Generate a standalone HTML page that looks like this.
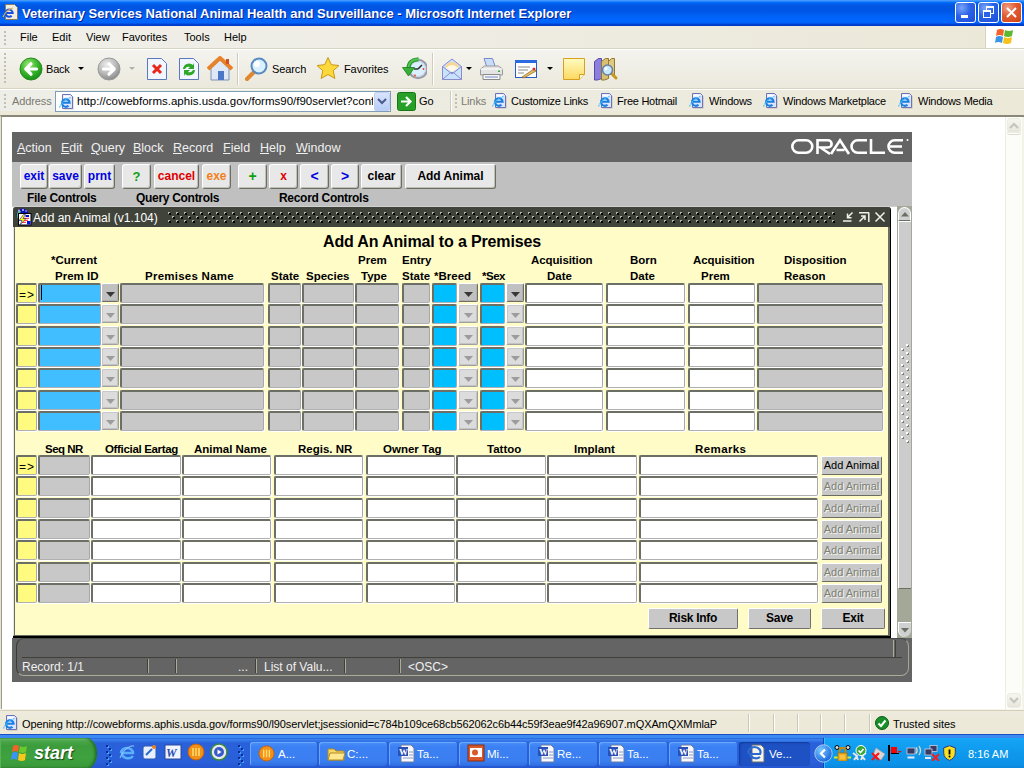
<!DOCTYPE html><html><head><meta charset="utf-8"><style>
*{margin:0;padding:0;box-sizing:border-box}
html,body{width:1024px;height:768px;overflow:hidden;background:#fff;font-family:"Liberation Sans",sans-serif;position:relative}
.ab{position:absolute}
.t{position:absolute;white-space:nowrap;line-height:1}
</style></head><body>

<div class="ab" style="left:0;top:0;width:1024px;height:26px;background:linear-gradient(#4496ff 0px,#4496ff 1px,#0072ff 2px,#005ce8 4px,#0055e2 8px,#0056e6 11px,#0060f2 15px,#0066ff 19px,#0064fc 23px,#0044d4 24px,#0038c4 26px)"></div>


<svg class="ab" style="left:2px;top:4px" width="17" height="17" viewBox="0 0 17 17">
<path d="M3.5 .5h9l3 3v12h-12z" fill="#f0eee0" stroke="#8a7a60"/>
<path d="M3.5 9h7.2a3.6 3.6 0 1 0-1 2.7" fill="none" stroke="#1a50e0" stroke-width="2"/>
<path d="M1 13c2-5 6-8 10-9" fill="none" stroke="#d8b050" stroke-width="1.2"/>
</svg>
<div class="t" style="left:22px;top:7px;font-size:13px;font-weight:bold;color:#fff;text-shadow:1px 1px 0 #0a1e8c">Veterinary Services National Animal Health and Surveillance - Microsoft Internet Explorer</div>

<div class="ab" style="left:955px;top:2px;width:21px;height:21px;border:1px solid #fff;border-radius:3px;background:radial-gradient(circle at 30% 25%,#7aa4f8,#2a62e8 45%,#1a4fd8)"><div class="ab" style="left:5px;top:12px;width:7px;height:3px;background:#fff"></div></div>
<div class="ab" style="left:978px;top:2px;width:21px;height:21px;border:1px solid #fff;border-radius:3px;background:radial-gradient(circle at 30% 25%,#7aa4f8,#2a62e8 45%,#1a4fd8)"><div class="ab" style="left:7px;top:3px;width:8px;height:8px;border:1px solid #fff;border-top-width:2px"></div><div class="ab" style="left:4px;top:7px;width:8px;height:8px;border:1px solid #fff;border-top-width:2px;background:#2a62e8"></div></div>
<div class="ab" style="left:1001px;top:2px;width:21px;height:21px;border:1px solid #fff;border-radius:3px;background:radial-gradient(circle at 30% 25%,#f0a088,#e05a30 45%,#d04418)"><svg class="ab" style="left:3px;top:3px" width="13" height="13"><path d="M2 2L11 11M11 2L2 11" stroke="#fff" stroke-width="2"/></svg></div>
<div class="ab" style="left:0;top:26px;width:1024px;height:23px;background:linear-gradient(90deg,#f0efe9,#eeece2 50%,#ebe8d8);border-bottom:1px solid #d8d4c4"></div>
<div class="ab" style="left:985px;top:26px;width:39px;height:22px;background:#fff;border-left:1px solid #d8d4c4"></div>

<div class="ab" style="left:4px;top:31px;width:2px;height:14px;background:repeating-linear-gradient(#c2bfae 0 2px,transparent 2px 4px)"></div>
<div class="t" style="left:20px;top:32px;font-size:11px;color:#000">File</div>
<div class="t" style="left:52px;top:32px;font-size:11px;color:#000">Edit</div>
<div class="t" style="left:86px;top:32px;font-size:11px;color:#000">View</div>
<div class="t" style="left:122px;top:32px;font-size:11px;color:#000">Favorites</div>
<div class="t" style="left:184px;top:32px;font-size:11px;color:#000">Tools</div>
<div class="t" style="left:224px;top:32px;font-size:11px;color:#000">Help</div>
<svg class="ab" style="left:994px;top:27px" width="22" height="20" viewBox="0 0 22 20">
<path d="M3 3q3-2 7 0l-1 6q-4-2-7 0z" fill="#f2622a"/>
<path d="M11 3q4 2 8 0l-1 6q-4 2-8 0z" fill="#5cb82e"/>
<path d="M2 10q3-2 7 0l-1 6q-4-2-7 0z" fill="#3a94e8"/>
<path d="M10 10q4 2 8 0l-1 6q-4 2-8 0z" fill="#f4c21a"/>
</svg>

<div class="ab" style="left:0;top:49px;width:1024px;height:40px;background:linear-gradient(#f4f3ee,#ebe9dc);border-top:1px solid #fff;border-bottom:1px solid #d8d4c4"></div>

<div class="ab" style="left:4px;top:53px;width:2px;height:32px;background:repeating-linear-gradient(#c2bfae 0 2px,transparent 2px 4px)"></div>
<svg class="ab" style="left:19px;top:57px" width="24" height="24" viewBox="0 0 24 24">
<defs><radialGradient id="gg" cx="40%" cy="30%" r="70%"><stop offset="0" stop-color="#9ce87a"/><stop offset="0.55" stop-color="#3cb82c"/><stop offset="1" stop-color="#18901a"/></radialGradient>
<radialGradient id="gr" cx="40%" cy="30%" r="70%"><stop offset="0" stop-color="#eeeeee"/><stop offset="0.6" stop-color="#b8b8b8"/><stop offset="1" stop-color="#8c8c8c"/></radialGradient></defs>
<circle cx="12" cy="12" r="11" fill="url(#gg)" stroke="#2a8a1e" stroke-width="1"/>
<path d="M7 12h10.5M12 6.8L6.8 12l5.2 5.2" stroke="#fff" stroke-width="3.2" stroke-linecap="round" stroke-linejoin="round" fill="none"/>
</svg>
<div class="t" style="left:46px;top:64px;font-size:11px;letter-spacing:-0.2px">Back</div>
<div class="ab" style="left:78px;top:67px;width:0;height:0;border-left:3px solid transparent;border-right:3px solid transparent;border-top:3px solid #000"></div>
<svg class="ab" style="left:97px;top:57px" width="24" height="24" viewBox="0 0 24 24">
<circle cx="12" cy="12" r="11" fill="url(#gr)" stroke="#9a9a9a" stroke-width="1"/>
<path d="M17 12H6.5M12 6.8l5.2 5.2-5.2 5.2" stroke="#fff" stroke-width="3.2" stroke-linecap="round" stroke-linejoin="round" fill="none"/>
</svg>
<div class="ab" style="left:129px;top:67px;width:0;height:0;border-left:3px solid transparent;border-right:3px solid transparent;border-top:3px solid #b0b0b0"></div>
<svg class="ab" style="left:146px;top:57px" width="22" height="24" viewBox="0 0 22 24">
<path d="M1.5 1.5h14l5 5v16h-19z" fill="#f2f6ff" stroke="#5a78c0"/>
<path d="M7 8l8 8M15 8l-8 8" stroke="#e8261a" stroke-width="3"/>
</svg>
<svg class="ab" style="left:178px;top:57px" width="22" height="24" viewBox="0 0 22 24">
<path d="M1.5 1.5h14l5 5v16h-19z" fill="#f2f6ff" stroke="#5a78c0"/>
<path d="M5 12a6 6 0 0 1 10-4l1-2v6h-6l2-2a4 4 0 0 0-5 2z" fill="#2fa82a"/>
<path d="M17 13a6 6 0 0 1-10 4l-1 2v-6h6l-2 2a4 4 0 0 0 5-2z" fill="#2fa82a"/>
</svg>
<svg class="ab" style="left:207px;top:56px" width="26" height="26" viewBox="0 0 26 26">
<path d="M4 12v12h18V12L13 4z" fill="#dfe8f6" stroke="#7a92b8"/>
<path d="M1 13L13 2l12 11" fill="none" stroke="#e8822a" stroke-width="4" stroke-linejoin="round"/>
<rect x="11" y="15" width="6" height="9" fill="#4a78c8"/>
<rect x="19" y="3" width="3" height="5" fill="#d05020"/>
</svg>
<div class="ab" style="left:237px;top:53px;width:1px;height:32px;background:#d0ccbc;box-shadow:1px 0 0 #fff"></div>
<svg class="ab" style="left:244px;top:56px" width="26" height="26" viewBox="0 0 26 26">
<path d="M3 23l7-7" stroke="#e0882e" stroke-width="4" stroke-linecap="round"/>
<circle cx="15" cy="10" r="7.5" fill="#d8f0ff" stroke="#5a8ac0" stroke-width="2"/>
<circle cx="13" cy="8" r="3" fill="#fff"/>
</svg>
<div class="t" style="left:272px;top:64px;font-size:11px;letter-spacing:-0.1px">Search</div>
<svg class="ab" style="left:315px;top:56px" width="26" height="26" viewBox="0 0 26 26">
<path d="M13 1.5l3.3 7.2 7.7.8-5.8 5.2 1.7 7.8L13 18.5l-6.9 4 1.7-7.8L2 9.5l7.7-.8z" fill="#fcd83a" stroke="#c89a18" stroke-width="1"/>
</svg>
<div class="t" style="left:344px;top:64px;font-size:11px;letter-spacing:-0.1px">Favorites</div>
<svg class="ab" style="left:401px;top:57px" width="26" height="24" viewBox="0 0 26 24">
<circle cx="17" cy="12" r="9.2" fill="#d8f0ff" stroke="#9a9aa8" stroke-width="2"/>
<circle cx="17" cy="12" r="7.5" fill="none" stroke="#c0c8e0" stroke-width=".8"/>
<path d="M17 12l4-4M17 12h-4" stroke="#303030" stroke-width="1.6"/>
<circle cx="22.5" cy="12" r=".9" fill="#f04010"/><circle cx="14" cy="18.5" r=".9" fill="#f04010"/>
<path d="M17.5 2.5C11 2 7.5 6 7.5 11" fill="none" stroke="#2a9a2a" stroke-width="4"/>
<path d="M17.5 2.5C11 2 7.5 6 7.5 11" fill="none" stroke="#58c858" stroke-width="1.8"/>
<path d="M1.5 10.5h12L7.5 19z" fill="#38b038" stroke="#1a7a1a" stroke-width=".8"/>
</svg>
<div class="ab" style="left:432px;top:53px;width:1px;height:32px;background:#d0ccbc;box-shadow:1px 0 0 #fff"></div>
<svg class="ab" style="left:441px;top:57px" width="22" height="24" viewBox="0 0 22 24">
<path d="M1.5 9.5L11 2l9.5 7.5v13h-19z" fill="#c8e4fc" stroke="#8a8ad0"/>
<path d="M4 10q3-5 7-5 4 0 7 5l-7 5z" fill="#f8d890"/>
<path d="M5 11q3-3 6-3t6 3l-6 4z" fill="#fff8ea"/>
<path d="M1.5 22.5l8-7h3l8 7M1.5 9.5L11 17l9.5-7.5" fill="none" stroke="#8a8ad0"/>
</svg>
<div class="ab" style="left:466px;top:67px;width:0;height:0;border-left:3px solid transparent;border-right:3px solid transparent;border-top:3px solid #000"></div>
<svg class="ab" style="left:479px;top:57px" width="25" height="24" viewBox="0 0 25 24">
<path d="M5 1.5h8.5l3 9H8z" fill="#c8dcfc" stroke="#7a8ac8"/>
<path d="M1.5 12l4-3h14l4 3v6h-22z" fill="#e4e4e4" stroke="#9a9a9a"/>
<path d="M1.5 12h22" stroke="#fff"/>
<path d="M4 17.5h17v5H4z" fill="#f4f4f4" stroke="#8a8a8a"/>
<path d="M6 20h13" stroke="#7a8ac8"/>
<rect x="19" y="13.5" width="2" height="1.5" fill="#30b030"/>
</svg>
<svg class="ab" style="left:514px;top:57px" width="24" height="24" viewBox="0 0 24 24">
<rect x="1.5" y="3.5" width="21" height="17" fill="#fff" stroke="#2a5ac8" stroke-width="1"/>
<rect x="1" y="3" width="22" height="3" fill="#2a6ae0"/>
<path d="M4 10h12M4 13h10M4 16h6" stroke="#8a8a8a"/>
<path d="M8 20l12-8 2 2-12 7z" fill="#e8c060" stroke="#806020" stroke-width=".7"/>
<circle cx="20" cy="12" r="1.5" fill="#d03030"/>
</svg>
<div class="ab" style="left:547px;top:67px;width:0;height:0;border-left:3px solid transparent;border-right:3px solid transparent;border-top:3px solid #000"></div>
<svg class="ab" style="left:562px;top:57px" width="24" height="24" viewBox="0 0 24 24">
<defs><linearGradient id="ny" x1="0" y1="0" x2="0" y2="1"><stop offset="0" stop-color="#fffcc0"/><stop offset="1" stop-color="#fcd860"/></linearGradient></defs>
<path d="M1.5 1.5h21v16l-5 5h-16z" fill="url(#ny)" stroke="#d8a020"/>
<path d="M17.5 22.5v-5h5" fill="#fff8d0" stroke="#d8a020"/>
</svg>
<svg class="ab" style="left:593px;top:57px" width="26" height="24" viewBox="0 0 26 24">
<path d="M1.5 4.5l4-3h3v20l-4 1.5h-3z" fill="#8a80e0" stroke="#5a4aa8"/>
<path d="M8.5 4.5l4-3h3v20l-4 1.5h-3z" fill="#d8c070" stroke="#907830"/>
<path d="M15.5 4.5l3-3h3v18" fill="#e0c880" stroke="#907830"/>
<path d="M18 16l5 5" stroke="#c89820" stroke-width="3" stroke-linecap="round"/>
<circle cx="14.5" cy="13" r="5" fill="#c8e8ff" stroke="#6a80a0" stroke-width="1.6"/>
<circle cx="13" cy="11.5" r="1.5" fill="#fff"/>
</svg>

<div class="ab" style="left:0;top:89px;width:1024px;height:27px;background:linear-gradient(90deg,#eeeee8,#ece9d8);border-top:1px solid #fff"></div>
<div class="ab" style="left:0;top:111px;width:1024px;height:5px;background:#ece9d8"></div>

<div class="ab" style="left:4px;top:94px;width:2px;height:16px;background:repeating-linear-gradient(#c2bfae 0 2px,transparent 2px 4px)"></div>
<div class="t" style="left:12px;top:96px;font-size:11px;letter-spacing:-0.1px;color:#7a7a70">Address</div>
<div class="ab" style="left:55px;top:91px;width:336px;height:21px;background:#fff;border:1px solid #7f9db9"></div>
<svg class="ab" style="left:58px;top:93px" width="16" height="17" viewBox="0 0 16 17">
<path d="M5.5 2.5h8l2 2v12h-10z" fill="#6a6a58" opacity=".35"/>
<path d="M4.5 1.5h8l2 2v12h-10z" fill="#dce4ff" stroke="#6a72b8"/>
<path d="M5.5 2.5h6v2h-6z" fill="#fff"/>
<path d="M4 9.8h7.6a3.8 3.8 0 1 0-1.1 2.9" fill="none" stroke="#1a80e0" stroke-width="2.1"/>
<path d="M1.5 14.5c2-5 7-9 11-10" fill="none" stroke="#48c0ff" stroke-width="1.2" stroke-dasharray="1.5 .8"/>
</svg>
<div class="t" style="left:77px;top:96px;font-size:11.5px;width:296px;overflow:hidden">http://cowebforms.aphis.usda.gov/forms90/f90servlet?config</div>
<div class="ab" style="left:374px;top:92px;width:16px;height:19px;background:linear-gradient(#d8e4fc,#b8cdf8);border:1px solid #c0d0f4;border-radius:2px"></div>
<svg class="ab" style="left:377px;top:98px" width="10" height="7"><path d="M1 1l4 4 4-4" stroke="#4a5a8a" stroke-width="2" fill="none"/></svg>
<svg class="ab" style="left:397px;top:92px" width="19" height="19" viewBox="0 0 19 19">
<rect x=".5" y=".5" width="18" height="18" rx="2" fill="#28a028" stroke="#187818"/>
<path d="M4 9.5h9M9 5l4.5 4.5L9 14" stroke="#fff" stroke-width="2.2" fill="none"/>
</svg>
<div class="t" style="left:419px;top:96px;font-size:11px;letter-spacing:-0.1px">Go</div>
<div class="ab" style="left:450px;top:91px;width:1px;height:21px;background:#d0ccbc;box-shadow:1px 0 0 #fff"></div>

<div class="ab" style="left:455px;top:94px;width:2px;height:16px;background:repeating-linear-gradient(#c2bfae 0 2px,transparent 2px 4px)"></div>
<div class="t" style="left:461px;top:96px;font-size:11px;letter-spacing:-0.1px;color:#7a7a70">Links</div>
<svg class="ab" style="left:491px;top:92px" width="17" height="17" viewBox="0 0 17 17">
<path d="M5.5 2.5h8l2 2v12h-10z" fill="#6a6a58" opacity=".35"/>
<path d="M4.5 1.5h8l2 2v12h-10z" fill="#dce4ff" stroke="#6a72b8"/>
<path d="M5.5 2.5h6v2h-6z" fill="#fff"/>
<path d="M4 9.8h7.6a3.8 3.8 0 1 0-1.1 2.9" fill="none" stroke="#1a80e0" stroke-width="2.1"/>
<path d="M1.5 14.5c2-5 7-9 11-10" fill="none" stroke="#48c0ff" stroke-width="1.2" stroke-dasharray="1.5 .8"/>
</svg>
<div class="t" style="left:511px;top:96px;font-size:11px;letter-spacing:-0.25px;width:80px">Customize Links</div>
<svg class="ab" style="left:597px;top:92px" width="17" height="17" viewBox="0 0 17 17">
<path d="M5.5 2.5h8l2 2v12h-10z" fill="#6a6a58" opacity=".35"/>
<path d="M4.5 1.5h8l2 2v12h-10z" fill="#dce4ff" stroke="#6a72b8"/>
<path d="M5.5 2.5h6v2h-6z" fill="#fff"/>
<path d="M4 9.8h7.6a3.8 3.8 0 1 0-1.1 2.9" fill="none" stroke="#1a80e0" stroke-width="2.1"/>
<path d="M1.5 14.5c2-5 7-9 11-10" fill="none" stroke="#48c0ff" stroke-width="1.2" stroke-dasharray="1.5 .8"/>
</svg>
<div class="t" style="left:617px;top:96px;font-size:11px;letter-spacing:-0.25px;width:65px">Free Hotmail</div>
<svg class="ab" style="left:688px;top:92px" width="17" height="17" viewBox="0 0 17 17">
<path d="M5.5 2.5h8l2 2v12h-10z" fill="#6a6a58" opacity=".35"/>
<path d="M4.5 1.5h8l2 2v12h-10z" fill="#dce4ff" stroke="#6a72b8"/>
<path d="M5.5 2.5h6v2h-6z" fill="#fff"/>
<path d="M4 9.8h7.6a3.8 3.8 0 1 0-1.1 2.9" fill="none" stroke="#1a80e0" stroke-width="2.1"/>
<path d="M1.5 14.5c2-5 7-9 11-10" fill="none" stroke="#48c0ff" stroke-width="1.2" stroke-dasharray="1.5 .8"/>
</svg>
<div class="t" style="left:709px;top:96px;font-size:11px;letter-spacing:-0.25px;width:47px">Windows</div>
<svg class="ab" style="left:762px;top:92px" width="17" height="17" viewBox="0 0 17 17">
<path d="M5.5 2.5h8l2 2v12h-10z" fill="#6a6a58" opacity=".35"/>
<path d="M4.5 1.5h8l2 2v12h-10z" fill="#dce4ff" stroke="#6a72b8"/>
<path d="M5.5 2.5h6v2h-6z" fill="#fff"/>
<path d="M4 9.8h7.6a3.8 3.8 0 1 0-1.1 2.9" fill="none" stroke="#1a80e0" stroke-width="2.1"/>
<path d="M1.5 14.5c2-5 7-9 11-10" fill="none" stroke="#48c0ff" stroke-width="1.2" stroke-dasharray="1.5 .8"/>
</svg>
<div class="t" style="left:783px;top:96px;font-size:11px;letter-spacing:-0.25px;width:108px">Windows Marketplace</div>
<svg class="ab" style="left:897px;top:92px" width="17" height="17" viewBox="0 0 17 17">
<path d="M5.5 2.5h8l2 2v12h-10z" fill="#6a6a58" opacity=".35"/>
<path d="M4.5 1.5h8l2 2v12h-10z" fill="#dce4ff" stroke="#6a72b8"/>
<path d="M5.5 2.5h6v2h-6z" fill="#fff"/>
<path d="M4 9.8h7.6a3.8 3.8 0 1 0-1.1 2.9" fill="none" stroke="#1a80e0" stroke-width="2.1"/>
<path d="M1.5 14.5c2-5 7-9 11-10" fill="none" stroke="#48c0ff" stroke-width="1.2" stroke-dasharray="1.5 .8"/>
</svg>
<div class="t" style="left:918px;top:96px;font-size:11px;letter-spacing:-0.25px;width:77px">Windows Media</div>
<div class="ab" style="left:0;top:115px;width:1024px;height:595px;background:#fff;border-top:2px solid #8a8778;border-left:1px solid #e4e2d6"></div>
<div class="ab" style="left:1px;top:117px;width:1px;height:592px;background:#a09c8c"></div>
<div class="ab" style="left:1005px;top:117px;width:17px;height:592px;background:#fcfcf8;border-left:1px solid #eeede5"></div>
<div class="ab" style="left:1022px;top:117px;width:2px;height:592px;background:#f4f3ea"></div>
<div class="ab" style="left:1007px;top:118px;width:14px;height:15px;background:linear-gradient(#f6f6f0,#e6e6dc);border:1px solid #ecebe0;border-radius:3px;box-shadow:0 1px 0 #fff,0 2px 0 #dcdac8"></div>
<svg class="ab" style="left:1009px;top:122px" width="10" height="7"><path d="M1 6l4-4 4 4" stroke="#c4c4bc" stroke-width="2" fill="none"/></svg>
<div class="ab" style="left:1007px;top:693px;width:14px;height:15px;background:linear-gradient(#f6f6f0,#e6e6dc);border:1px solid #ecebe0;border-radius:3px"></div>
<svg class="ab" style="left:1009px;top:697px" width="10" height="7"><path d="M1 1l4 4 4-4" stroke="#c4c4bc" stroke-width="2" fill="none"/></svg>

<div class="ab" style="left:12px;top:132px;width:900px;height:30px;background:#646464"></div>
<div class="ab" style="left:12px;top:162px;width:900px;height:45px;background:#c0c0c0;border-bottom:1px solid #d0d0d0"></div>
<div class="ab" style="left:12px;top:207px;width:900px;height:431px;background:#fff"></div>
<div class="ab" style="left:12px;top:638px;width:900px;height:44px;background:#646464"></div>

<div class="t" style="left:17px;top:142px;font-size:12.5px;color:#f0f0f0"><u style="text-underline-offset:1px">A</u>ction</div>
<div class="t" style="left:61px;top:142px;font-size:12.5px;color:#f0f0f0"><u style="text-underline-offset:1px">E</u>dit</div>
<div class="t" style="left:91px;top:142px;font-size:12.5px;color:#f0f0f0"><u style="text-underline-offset:1px">Q</u>uery</div>
<div class="t" style="left:133px;top:142px;font-size:12.5px;color:#f0f0f0"><u style="text-underline-offset:1px">B</u>lock</div>
<div class="t" style="left:173px;top:142px;font-size:12.5px;color:#f0f0f0"><u style="text-underline-offset:1px">R</u>ecord</div>
<div class="t" style="left:223px;top:142px;font-size:12.5px;color:#f0f0f0"><u style="text-underline-offset:1px">F</u>ield</div>
<div class="t" style="left:260px;top:142px;font-size:12.5px;color:#f0f0f0"><u style="text-underline-offset:1px">H</u>elp</div>
<div class="t" style="left:296px;top:142px;font-size:12.5px;color:#f0f0f0"><u style="text-underline-offset:1px">W</u>indow</div>
<svg class="ab" style="left:790px;top:138px" width="120" height="18" viewBox="0 0 120 18">
<g fill="none" stroke="#fff" stroke-width="2.6">
<rect x="2.3" y="2.3" width="20" height="12.4" rx="6.2"/>
<path d="M27.5 16V2.3h10.5a3.6 3.6 0 0 1 0 7.2H30.5l9.5 6.5"/>
<path d="M41 16L50 2.3 59 16M46.5 12h8"/>
<path d="M77 2.3h-9.3a6.2 6.2 0 0 0 0 12.4H77"/>
<path d="M81 1v13.7h14"/>
<path d="M113 2.3h-8.3a6.2 6.2 0 0 0 0 12.4h8.3M100 8.5h12"/>
</g>
<circle cx="117.5" cy="2" r="1" fill="#fff"/>
</svg>

<div class="ab" style="left:20px;top:164px;width:28px;height:25px;background:#e8e8e8;border-top:1px solid #fff;border-left:1px solid #fff;border-right:1px solid #6a6e60;border-bottom:1px solid #6a6e60;box-shadow:inset -1px -1px 0 #c0c0b8;border-radius:3px;text-align:center;font-size:12px;font-weight:bold;color:#0000e0;line-height:23px">exit</div>
<div class="ab" style="left:49px;top:164px;width:33px;height:25px;background:#e8e8e8;border-top:1px solid #fff;border-left:1px solid #fff;border-right:1px solid #6a6e60;border-bottom:1px solid #6a6e60;box-shadow:inset -1px -1px 0 #c0c0b8;border-radius:3px;text-align:center;font-size:12px;font-weight:bold;color:#0000e0;line-height:23px">save</div>
<div class="ab" style="left:84px;top:164px;width:31px;height:25px;background:#e8e8e8;border-top:1px solid #fff;border-left:1px solid #fff;border-right:1px solid #6a6e60;border-bottom:1px solid #6a6e60;box-shadow:inset -1px -1px 0 #c0c0b8;border-radius:3px;text-align:center;font-size:12px;font-weight:bold;color:#0000e0;line-height:23px">prnt</div>
<div class="ab" style="left:122px;top:164px;width:29px;height:25px;background:#e8e8e8;border-top:1px solid #fff;border-left:1px solid #fff;border-right:1px solid #6a6e60;border-bottom:1px solid #6a6e60;box-shadow:inset -1px -1px 0 #c0c0b8;border-radius:3px;text-align:center;font-size:13px;font-weight:bold;color:#10a010;line-height:23px">?</div>
<div class="ab" style="left:154px;top:164px;width:45px;height:25px;background:#e8e8e8;border-top:1px solid #fff;border-left:1px solid #fff;border-right:1px solid #6a6e60;border-bottom:1px solid #6a6e60;box-shadow:inset -1px -1px 0 #c0c0b8;border-radius:3px;text-align:center;font-size:12px;font-weight:bold;color:#e00000;line-height:23px">cancel</div>
<div class="ab" style="left:202px;top:164px;width:29px;height:25px;background:#e8e8e8;border-top:1px solid #fff;border-left:1px solid #fff;border-right:1px solid #6a6e60;border-bottom:1px solid #6a6e60;box-shadow:inset -1px -1px 0 #c0c0b8;border-radius:3px;text-align:center;font-size:12px;font-weight:bold;color:#f08020;line-height:23px">exe</div>
<div class="ab" style="left:238px;top:164px;width:29px;height:25px;background:#e8e8e8;border-top:1px solid #fff;border-left:1px solid #fff;border-right:1px solid #6a6e60;border-bottom:1px solid #6a6e60;box-shadow:inset -1px -1px 0 #c0c0b8;border-radius:3px;text-align:center;font-size:14px;font-weight:bold;color:#10a010;line-height:23px">+</div>
<div class="ab" style="left:269px;top:164px;width:29px;height:25px;background:#e8e8e8;border-top:1px solid #fff;border-left:1px solid #fff;border-right:1px solid #6a6e60;border-bottom:1px solid #6a6e60;box-shadow:inset -1px -1px 0 #c0c0b8;border-radius:3px;text-align:center;font-size:12px;font-weight:bold;color:#e00000;line-height:23px">x</div>
<div class="ab" style="left:300px;top:164px;width:29px;height:25px;background:#e8e8e8;border-top:1px solid #fff;border-left:1px solid #fff;border-right:1px solid #6a6e60;border-bottom:1px solid #6a6e60;box-shadow:inset -1px -1px 0 #c0c0b8;border-radius:3px;text-align:center;font-size:14px;font-weight:bold;color:#0000e0;line-height:23px">&lt;</div>
<div class="ab" style="left:331px;top:164px;width:28px;height:25px;background:#e8e8e8;border-top:1px solid #fff;border-left:1px solid #fff;border-right:1px solid #6a6e60;border-bottom:1px solid #6a6e60;box-shadow:inset -1px -1px 0 #c0c0b8;border-radius:3px;text-align:center;font-size:14px;font-weight:bold;color:#0000e0;line-height:23px">&gt;</div>
<div class="ab" style="left:361px;top:164px;width:41px;height:25px;background:#e8e8e8;border-top:1px solid #fff;border-left:1px solid #fff;border-right:1px solid #6a6e60;border-bottom:1px solid #6a6e60;box-shadow:inset -1px -1px 0 #c0c0b8;border-radius:3px;text-align:center;font-size:12px;font-weight:bold;color:#000;line-height:23px">clear</div>
<div class="ab" style="left:405px;top:164px;width:91px;height:25px;background:#e8e8e8;border-top:1px solid #fff;border-left:1px solid #fff;border-right:1px solid #6a6e60;border-bottom:1px solid #6a6e60;box-shadow:inset -1px -1px 0 #c0c0b8;border-radius:3px;text-align:center;font-size:12px;font-weight:bold;color:#000;line-height:23px">Add Animal</div>
<div class="t" style="left:27px;top:192px;font-size:12px;font-weight:bold;letter-spacing:-0.3px;color:#000">File Controls</div>
<div class="t" style="left:136px;top:192px;font-size:12px;font-weight:bold;letter-spacing:-0.3px;color:#000">Query Controls</div>
<div class="t" style="left:279px;top:192px;font-size:12px;font-weight:bold;letter-spacing:-0.3px;color:#000">Record Controls</div>
<div class="ab" style="left:897px;top:206px;width:15px;height:432px;background:#a4a898"></div>
<div class="ab" style="left:898px;top:207px;width:13px;height:14px;background:#d0d0d0;border-top:1px solid #fff;border-left:1px solid #fff;border-right:1px solid #fff;border-radius:7px 7px 0 0;border-bottom:1px solid #6a7064"></div>
<svg class="ab" style="left:901px;top:212px" width="8" height="5"><path d="M0 4.5L4 0 8 4.5z" fill="#6a7064"/></svg>
<div class="ab" style="left:898px;top:221px;width:13px;height:368px;background:#cccccc;border-top:1px solid #fff;border-left:1px solid #fff;border-bottom:1px solid #6a7064"></div>
<div class="ab" style="left:898px;top:622px;width:13px;height:15px;background:#d0d0d0;border-top:1px solid #fff;border-left:1px solid #fff;border-radius:0 0 7px 7px"></div>
<svg class="ab" style="left:901px;top:628px" width="8" height="5"><path d="M0 0L4 4.5 8 0z" fill="#6a7064"/></svg>
<svg class="ab" style="left:900px;top:344px" width="10" height="100">
<defs><pattern id="sd" width="10" height="8" patternUnits="userSpaceOnUse"><rect x="6" y="0" width="2" height="2" fill="#fff"/><rect x="7" y="1" width="2" height="2" fill="#7a7e70"/><rect x="7" y="1" width="1" height="1" fill="#fff"/><rect x="1" y="4" width="2" height="2" fill="#fff"/><rect x="2" y="5" width="2" height="2" fill="#7a7e70"/><rect x="2" y="5" width="1" height="1" fill="#fff"/></pattern></defs>
<rect width="10" height="100" fill="url(#sd)"/>
</svg>

<div class="ab" style="left:13px;top:207px;width:878px;height:431px;background:#000;border-radius:3px 3px 0 0"></div>
<div class="ab" style="left:13px;top:207px;width:877px;height:429px;background:#fffcc8;border-left:1px solid #e8e8e0;border-right:2px solid #6a6e60;border-bottom:1px solid #6a6e60;border-radius:3px 3px 0 0;box-shadow:inset 1px 0 0 #6a6e60"></div>
<div class="ab" style="left:13px;top:207px;width:877px;height:20px;background:#40433a;border-radius:3px 3px 0 0"></div>
<svg class="ab" style="left:168px;top:212px" width="668" height="11">
<defs><pattern id="dp" width="8" height="8" patternUnits="userSpaceOnUse"><rect x="0" y="0" width="2" height="2" fill="#b4b4a4"/><rect x="1" y="1" width="2" height="2" fill="#000"/><rect x="4" y="4" width="2" height="2" fill="#b4b4a4"/><rect x="5" y="5" width="2" height="2" fill="#000"/></pattern></defs>
<rect width="668" height="11" fill="url(#dp)"/>
</svg>
<svg class="ab" style="left:15px;top:208px" width="18" height="18" viewBox="0 0 18 18">
<ellipse cx="7.5" cy="6.5" rx="6" ry="6" fill="#0a10b8"/>
<path d="M3 3q-2 4 0 8l2-1q-1-4 1-7z" fill="#58b878"/>
<circle cx="4" cy="2.5" r="1" fill="#b8b0ff"/><circle cx="8" cy="2" r="1" fill="#c8c0ff"/><circle cx="11" cy="3" r=".8" fill="#d0d0ff"/>
<rect x="3.5" y="5.5" width="12.5" height="11.5" fill="#fff" stroke="#000" stroke-width="1"/>
<rect x="10.5" y="7" width="3.5" height="2" fill="#0010e0"/>
<path d="M9 10.3h5M9 12.3h4M7 14.3h4" stroke="#ff1a1a" stroke-width="1"/>
<rect x="12" y="13" width="3.5" height="3.5" fill="#0010e0"/>
<path d="M8.5 6.5L4 12.5h3L5 17l6-6.5H8l2.5-4z" fill="#ffff00" stroke="#0a10a0" stroke-width=".6"/>
</svg>
<div class="t" style="left:33px;top:212px;font-size:12px;color:#fff">Add an Animal (v1.104)</div>
<svg class="ab" style="left:842px;top:210px" width="46" height="15" viewBox="0 0 46 15">
<g stroke="#f0f0e8" stroke-width="1.5" fill="none">
<path d="M1 11h8.5"/><path d="M10.5 2.5L5.5 7.5M5.5 3.5v4.2h4"/>
<path d="M17 2.8h10M26.8 2.5v9.5M17.5 11.5L23 6M19 6h4v4"/>
<path d="M33.5 2.5l9 9M42.5 2.5l-9 9"/>
</g>
</svg>

<div class="t" style="left:323px;top:234px;font-size:16px;font-weight:bold;letter-spacing:-0.15px">Add An Animal to a Premises</div>
<div class="t" style="left:51px;top:255px;font-size:11.5px;font-weight:bold;letter-spacing:0px">*Current</div>
<div class="t" style="left:55px;top:271px;font-size:11.5px;font-weight:bold;letter-spacing:0px">Prem ID</div>
<div class="t" style="left:145px;top:271px;font-size:11.5px;font-weight:bold;letter-spacing:0.25px">Premises Name</div>
<div class="t" style="left:271px;top:271px;font-size:11.5px;font-weight:bold;letter-spacing:0px">State</div>
<div class="t" style="left:306px;top:271px;font-size:11.5px;font-weight:bold;letter-spacing:0px">Species</div>
<div class="t" style="left:358px;top:255px;font-size:11.5px;font-weight:bold;letter-spacing:0px">Prem</div>
<div class="t" style="left:361px;top:271px;font-size:11.5px;font-weight:bold;letter-spacing:0px">Type</div>
<div class="t" style="left:402px;top:255px;font-size:11.5px;font-weight:bold;letter-spacing:0px">Entry</div>
<div class="t" style="left:402px;top:271px;font-size:11.5px;font-weight:bold;letter-spacing:0px">State</div>
<div class="t" style="left:434px;top:271px;font-size:11.5px;font-weight:bold;letter-spacing:0px">*Breed</div>
<div class="t" style="left:482px;top:271px;font-size:11.5px;font-weight:bold;letter-spacing:-0.5px">*Sex</div>
<div class="t" style="left:531px;top:255px;font-size:11.5px;font-weight:bold;letter-spacing:-0.1px">Acquisition</div>
<div class="t" style="left:547px;top:271px;font-size:11.5px;font-weight:bold;letter-spacing:0px">Date</div>
<div class="t" style="left:630px;top:255px;font-size:11.5px;font-weight:bold;letter-spacing:0px">Born</div>
<div class="t" style="left:630px;top:271px;font-size:11.5px;font-weight:bold;letter-spacing:0px">Date</div>
<div class="t" style="left:693px;top:255px;font-size:11.5px;font-weight:bold;letter-spacing:-0.1px">Acquisition</div>
<div class="t" style="left:701px;top:271px;font-size:11.5px;font-weight:bold;letter-spacing:0px">Prem</div>
<div class="t" style="left:784px;top:255px;font-size:11.5px;font-weight:bold;letter-spacing:0px">Disposition</div>
<div class="t" style="left:784px;top:271px;font-size:11.5px;font-weight:bold;letter-spacing:0px">Reason</div>
<div class="ab" style="left:16px;top:283px;width:21px;height:20px;background:#fffa80;border-top:2px solid #6b6f65;border-left:2px solid #6b6f65;border-right:1px solid #a8a8a8;border-bottom:1px solid #b0b0b0;border-radius:2px;box-shadow:1px 1px 0 #fff"></div>
<div class="t" style="left:19px;top:289px;font-size:12px;letter-spacing:1px">=&gt;</div>
<div class="ab" style="left:38px;top:283px;width:63px;height:20px;background:#40beff;border-top:2px solid #6b6f65;border-left:2px solid #6b6f65;border-right:1px solid #a8a8a8;border-bottom:1px solid #b0b0b0;border-radius:2px;box-shadow:1px 1px 0 #fff"></div>
<div class="ab" style="left:101px;top:283px;width:18px;height:19px;background:#c0c0c0;border-top:1px solid #fff;border-left:1px solid #fff;border-right:1px solid #6e6e66;border-bottom:1px solid #6e6e66;border-radius:2px;box-shadow:inset -1px -1px 0 #b0b0b0"></div>
<svg class="ab" style="left:106px;top:292px" width="9" height="6"><path d="M0 0h9L4.5 5z" fill="#383838"/></svg>
<div class="ab" style="left:120px;top:283px;width:144px;height:20px;background:#c8c8c8;border-top:2px solid #6b6f65;border-left:2px solid #6b6f65;border-right:1px solid #a8a8a8;border-bottom:1px solid #b0b0b0;border-radius:2px;box-shadow:1px 1px 0 #fff"></div>
<div class="ab" style="left:268px;top:283px;width:33px;height:20px;background:#c8c8c8;border-top:2px solid #6b6f65;border-left:2px solid #6b6f65;border-right:1px solid #a8a8a8;border-bottom:1px solid #b0b0b0;border-radius:2px;box-shadow:1px 1px 0 #fff"></div>
<div class="ab" style="left:302px;top:283px;width:52px;height:20px;background:#c8c8c8;border-top:2px solid #6b6f65;border-left:2px solid #6b6f65;border-right:1px solid #a8a8a8;border-bottom:1px solid #b0b0b0;border-radius:2px;box-shadow:1px 1px 0 #fff"></div>
<div class="ab" style="left:355px;top:283px;width:44px;height:20px;background:#c8c8c8;border-top:2px solid #6b6f65;border-left:2px solid #6b6f65;border-right:1px solid #a8a8a8;border-bottom:1px solid #b0b0b0;border-radius:2px;box-shadow:1px 1px 0 #fff"></div>
<div class="ab" style="left:402px;top:283px;width:28px;height:20px;background:#c8c8c8;border-top:2px solid #6b6f65;border-left:2px solid #6b6f65;border-right:1px solid #a8a8a8;border-bottom:1px solid #b0b0b0;border-radius:2px;box-shadow:1px 1px 0 #fff"></div>
<div class="ab" style="left:432px;top:283px;width:25px;height:20px;background:#00bfff;border-top:2px solid #6b6f65;border-left:2px solid #6b6f65;border-right:1px solid #a8a8a8;border-bottom:1px solid #b0b0b0;border-radius:2px;box-shadow:1px 1px 0 #fff"></div>
<div class="ab" style="left:458px;top:283px;width:20px;height:19px;background:#c0c0c0;border-top:1px solid #fff;border-left:1px solid #fff;border-right:1px solid #6e6e66;border-bottom:1px solid #6e6e66;border-radius:2px;box-shadow:inset -1px -1px 0 #b0b0b0"></div>
<svg class="ab" style="left:464px;top:292px" width="9" height="6"><path d="M0 0h9L4.5 5z" fill="#383838"/></svg>
<div class="ab" style="left:480px;top:283px;width:25px;height:20px;background:#00bfff;border-top:2px solid #6b6f65;border-left:2px solid #6b6f65;border-right:1px solid #a8a8a8;border-bottom:1px solid #b0b0b0;border-radius:2px;box-shadow:1px 1px 0 #fff"></div>
<div class="ab" style="left:506px;top:283px;width:18px;height:19px;background:#c0c0c0;border-top:1px solid #fff;border-left:1px solid #fff;border-right:1px solid #6e6e66;border-bottom:1px solid #6e6e66;border-radius:2px;box-shadow:inset -1px -1px 0 #b0b0b0"></div>
<svg class="ab" style="left:511px;top:292px" width="9" height="6"><path d="M0 0h9L4.5 5z" fill="#383838"/></svg>
<div class="ab" style="left:525px;top:283px;width:78px;height:20px;background:#fff;border-top:2px solid #6b6f65;border-left:2px solid #6b6f65;border-right:1px solid #a8a8a8;border-bottom:1px solid #b0b0b0;border-radius:2px;box-shadow:1px 1px 0 #fff"></div>
<div class="ab" style="left:606px;top:283px;width:79px;height:20px;background:#fff;border-top:2px solid #6b6f65;border-left:2px solid #6b6f65;border-right:1px solid #a8a8a8;border-bottom:1px solid #b0b0b0;border-radius:2px;box-shadow:1px 1px 0 #fff"></div>
<div class="ab" style="left:688px;top:283px;width:67px;height:20px;background:#fff;border-top:2px solid #6b6f65;border-left:2px solid #6b6f65;border-right:1px solid #a8a8a8;border-bottom:1px solid #b0b0b0;border-radius:2px;box-shadow:1px 1px 0 #fff"></div>
<div class="ab" style="left:757px;top:283px;width:126px;height:20px;background:#c8c8c8;border-top:2px solid #6b6f65;border-left:2px solid #6b6f65;border-right:1px solid #a8a8a8;border-bottom:1px solid #b0b0b0;border-radius:2px;box-shadow:1px 1px 0 #fff"></div>
<div class="ab" style="left:16px;top:304px;width:21px;height:20px;background:#fffa80;border-top:2px solid #6b6f65;border-left:2px solid #6b6f65;border-right:1px solid #a8a8a8;border-bottom:1px solid #b0b0b0;border-radius:2px;box-shadow:1px 1px 0 #fff"></div>
<div class="ab" style="left:38px;top:304px;width:63px;height:20px;background:#40beff;border-top:2px solid #6b6f65;border-left:2px solid #6b6f65;border-right:1px solid #a8a8a8;border-bottom:1px solid #b0b0b0;border-radius:2px;box-shadow:1px 1px 0 #fff"></div>
<div class="ab" style="left:101px;top:304px;width:18px;height:19px;background:#dcdcdc;border-top:1px solid #fff;border-left:1px solid #fff;border-right:1px solid #a0a0a0;border-bottom:1px solid #a0a0a0;border-radius:2px;box-shadow:inset -1px -1px 0 #c4c4c4,inset 1px 1px 0 #c8c8c8"></div>
<svg class="ab" style="left:106px;top:313px" width="9" height="6"><path d="M0 0h9L4.5 5z" fill="#9c9c9c"/></svg>
<div class="ab" style="left:120px;top:304px;width:144px;height:20px;background:#c8c8c8;border-top:2px solid #6b6f65;border-left:2px solid #6b6f65;border-right:1px solid #a8a8a8;border-bottom:1px solid #b0b0b0;border-radius:2px;box-shadow:1px 1px 0 #fff"></div>
<div class="ab" style="left:268px;top:304px;width:33px;height:20px;background:#c8c8c8;border-top:2px solid #6b6f65;border-left:2px solid #6b6f65;border-right:1px solid #a8a8a8;border-bottom:1px solid #b0b0b0;border-radius:2px;box-shadow:1px 1px 0 #fff"></div>
<div class="ab" style="left:302px;top:304px;width:52px;height:20px;background:#c8c8c8;border-top:2px solid #6b6f65;border-left:2px solid #6b6f65;border-right:1px solid #a8a8a8;border-bottom:1px solid #b0b0b0;border-radius:2px;box-shadow:1px 1px 0 #fff"></div>
<div class="ab" style="left:355px;top:304px;width:44px;height:20px;background:#c8c8c8;border-top:2px solid #6b6f65;border-left:2px solid #6b6f65;border-right:1px solid #a8a8a8;border-bottom:1px solid #b0b0b0;border-radius:2px;box-shadow:1px 1px 0 #fff"></div>
<div class="ab" style="left:402px;top:304px;width:28px;height:20px;background:#c8c8c8;border-top:2px solid #6b6f65;border-left:2px solid #6b6f65;border-right:1px solid #a8a8a8;border-bottom:1px solid #b0b0b0;border-radius:2px;box-shadow:1px 1px 0 #fff"></div>
<div class="ab" style="left:432px;top:304px;width:25px;height:20px;background:#00bfff;border-top:2px solid #6b6f65;border-left:2px solid #6b6f65;border-right:1px solid #a8a8a8;border-bottom:1px solid #b0b0b0;border-radius:2px;box-shadow:1px 1px 0 #fff"></div>
<div class="ab" style="left:458px;top:304px;width:20px;height:19px;background:#dcdcdc;border-top:1px solid #fff;border-left:1px solid #fff;border-right:1px solid #a0a0a0;border-bottom:1px solid #a0a0a0;border-radius:2px;box-shadow:inset -1px -1px 0 #c4c4c4,inset 1px 1px 0 #c8c8c8"></div>
<svg class="ab" style="left:464px;top:313px" width="9" height="6"><path d="M0 0h9L4.5 5z" fill="#9c9c9c"/></svg>
<div class="ab" style="left:480px;top:304px;width:25px;height:20px;background:#00bfff;border-top:2px solid #6b6f65;border-left:2px solid #6b6f65;border-right:1px solid #a8a8a8;border-bottom:1px solid #b0b0b0;border-radius:2px;box-shadow:1px 1px 0 #fff"></div>
<div class="ab" style="left:506px;top:304px;width:18px;height:19px;background:#dcdcdc;border-top:1px solid #fff;border-left:1px solid #fff;border-right:1px solid #a0a0a0;border-bottom:1px solid #a0a0a0;border-radius:2px;box-shadow:inset -1px -1px 0 #c4c4c4,inset 1px 1px 0 #c8c8c8"></div>
<svg class="ab" style="left:511px;top:313px" width="9" height="6"><path d="M0 0h9L4.5 5z" fill="#9c9c9c"/></svg>
<div class="ab" style="left:525px;top:304px;width:78px;height:20px;background:#fff;border-top:2px solid #6b6f65;border-left:2px solid #6b6f65;border-right:1px solid #a8a8a8;border-bottom:1px solid #b0b0b0;border-radius:2px;box-shadow:1px 1px 0 #fff"></div>
<div class="ab" style="left:606px;top:304px;width:79px;height:20px;background:#fff;border-top:2px solid #6b6f65;border-left:2px solid #6b6f65;border-right:1px solid #a8a8a8;border-bottom:1px solid #b0b0b0;border-radius:2px;box-shadow:1px 1px 0 #fff"></div>
<div class="ab" style="left:688px;top:304px;width:67px;height:20px;background:#fff;border-top:2px solid #6b6f65;border-left:2px solid #6b6f65;border-right:1px solid #a8a8a8;border-bottom:1px solid #b0b0b0;border-radius:2px;box-shadow:1px 1px 0 #fff"></div>
<div class="ab" style="left:757px;top:304px;width:126px;height:20px;background:#c8c8c8;border-top:2px solid #6b6f65;border-left:2px solid #6b6f65;border-right:1px solid #a8a8a8;border-bottom:1px solid #b0b0b0;border-radius:2px;box-shadow:1px 1px 0 #fff"></div>
<div class="ab" style="left:16px;top:326px;width:21px;height:20px;background:#fffa80;border-top:2px solid #6b6f65;border-left:2px solid #6b6f65;border-right:1px solid #a8a8a8;border-bottom:1px solid #b0b0b0;border-radius:2px;box-shadow:1px 1px 0 #fff"></div>
<div class="ab" style="left:38px;top:326px;width:63px;height:20px;background:#40beff;border-top:2px solid #6b6f65;border-left:2px solid #6b6f65;border-right:1px solid #a8a8a8;border-bottom:1px solid #b0b0b0;border-radius:2px;box-shadow:1px 1px 0 #fff"></div>
<div class="ab" style="left:101px;top:326px;width:18px;height:19px;background:#dcdcdc;border-top:1px solid #fff;border-left:1px solid #fff;border-right:1px solid #a0a0a0;border-bottom:1px solid #a0a0a0;border-radius:2px;box-shadow:inset -1px -1px 0 #c4c4c4,inset 1px 1px 0 #c8c8c8"></div>
<svg class="ab" style="left:106px;top:335px" width="9" height="6"><path d="M0 0h9L4.5 5z" fill="#9c9c9c"/></svg>
<div class="ab" style="left:120px;top:326px;width:144px;height:20px;background:#c8c8c8;border-top:2px solid #6b6f65;border-left:2px solid #6b6f65;border-right:1px solid #a8a8a8;border-bottom:1px solid #b0b0b0;border-radius:2px;box-shadow:1px 1px 0 #fff"></div>
<div class="ab" style="left:268px;top:326px;width:33px;height:20px;background:#c8c8c8;border-top:2px solid #6b6f65;border-left:2px solid #6b6f65;border-right:1px solid #a8a8a8;border-bottom:1px solid #b0b0b0;border-radius:2px;box-shadow:1px 1px 0 #fff"></div>
<div class="ab" style="left:302px;top:326px;width:52px;height:20px;background:#c8c8c8;border-top:2px solid #6b6f65;border-left:2px solid #6b6f65;border-right:1px solid #a8a8a8;border-bottom:1px solid #b0b0b0;border-radius:2px;box-shadow:1px 1px 0 #fff"></div>
<div class="ab" style="left:355px;top:326px;width:44px;height:20px;background:#c8c8c8;border-top:2px solid #6b6f65;border-left:2px solid #6b6f65;border-right:1px solid #a8a8a8;border-bottom:1px solid #b0b0b0;border-radius:2px;box-shadow:1px 1px 0 #fff"></div>
<div class="ab" style="left:402px;top:326px;width:28px;height:20px;background:#c8c8c8;border-top:2px solid #6b6f65;border-left:2px solid #6b6f65;border-right:1px solid #a8a8a8;border-bottom:1px solid #b0b0b0;border-radius:2px;box-shadow:1px 1px 0 #fff"></div>
<div class="ab" style="left:432px;top:326px;width:25px;height:20px;background:#00bfff;border-top:2px solid #6b6f65;border-left:2px solid #6b6f65;border-right:1px solid #a8a8a8;border-bottom:1px solid #b0b0b0;border-radius:2px;box-shadow:1px 1px 0 #fff"></div>
<div class="ab" style="left:458px;top:326px;width:20px;height:19px;background:#dcdcdc;border-top:1px solid #fff;border-left:1px solid #fff;border-right:1px solid #a0a0a0;border-bottom:1px solid #a0a0a0;border-radius:2px;box-shadow:inset -1px -1px 0 #c4c4c4,inset 1px 1px 0 #c8c8c8"></div>
<svg class="ab" style="left:464px;top:335px" width="9" height="6"><path d="M0 0h9L4.5 5z" fill="#9c9c9c"/></svg>
<div class="ab" style="left:480px;top:326px;width:25px;height:20px;background:#00bfff;border-top:2px solid #6b6f65;border-left:2px solid #6b6f65;border-right:1px solid #a8a8a8;border-bottom:1px solid #b0b0b0;border-radius:2px;box-shadow:1px 1px 0 #fff"></div>
<div class="ab" style="left:506px;top:326px;width:18px;height:19px;background:#dcdcdc;border-top:1px solid #fff;border-left:1px solid #fff;border-right:1px solid #a0a0a0;border-bottom:1px solid #a0a0a0;border-radius:2px;box-shadow:inset -1px -1px 0 #c4c4c4,inset 1px 1px 0 #c8c8c8"></div>
<svg class="ab" style="left:511px;top:335px" width="9" height="6"><path d="M0 0h9L4.5 5z" fill="#9c9c9c"/></svg>
<div class="ab" style="left:525px;top:326px;width:78px;height:20px;background:#fff;border-top:2px solid #6b6f65;border-left:2px solid #6b6f65;border-right:1px solid #a8a8a8;border-bottom:1px solid #b0b0b0;border-radius:2px;box-shadow:1px 1px 0 #fff"></div>
<div class="ab" style="left:606px;top:326px;width:79px;height:20px;background:#fff;border-top:2px solid #6b6f65;border-left:2px solid #6b6f65;border-right:1px solid #a8a8a8;border-bottom:1px solid #b0b0b0;border-radius:2px;box-shadow:1px 1px 0 #fff"></div>
<div class="ab" style="left:688px;top:326px;width:67px;height:20px;background:#fff;border-top:2px solid #6b6f65;border-left:2px solid #6b6f65;border-right:1px solid #a8a8a8;border-bottom:1px solid #b0b0b0;border-radius:2px;box-shadow:1px 1px 0 #fff"></div>
<div class="ab" style="left:757px;top:326px;width:126px;height:20px;background:#c8c8c8;border-top:2px solid #6b6f65;border-left:2px solid #6b6f65;border-right:1px solid #a8a8a8;border-bottom:1px solid #b0b0b0;border-radius:2px;box-shadow:1px 1px 0 #fff"></div>
<div class="ab" style="left:16px;top:347px;width:21px;height:20px;background:#fffa80;border-top:2px solid #6b6f65;border-left:2px solid #6b6f65;border-right:1px solid #a8a8a8;border-bottom:1px solid #b0b0b0;border-radius:2px;box-shadow:1px 1px 0 #fff"></div>
<div class="ab" style="left:38px;top:347px;width:63px;height:20px;background:#40beff;border-top:2px solid #6b6f65;border-left:2px solid #6b6f65;border-right:1px solid #a8a8a8;border-bottom:1px solid #b0b0b0;border-radius:2px;box-shadow:1px 1px 0 #fff"></div>
<div class="ab" style="left:101px;top:347px;width:18px;height:19px;background:#dcdcdc;border-top:1px solid #fff;border-left:1px solid #fff;border-right:1px solid #a0a0a0;border-bottom:1px solid #a0a0a0;border-radius:2px;box-shadow:inset -1px -1px 0 #c4c4c4,inset 1px 1px 0 #c8c8c8"></div>
<svg class="ab" style="left:106px;top:356px" width="9" height="6"><path d="M0 0h9L4.5 5z" fill="#9c9c9c"/></svg>
<div class="ab" style="left:120px;top:347px;width:144px;height:20px;background:#c8c8c8;border-top:2px solid #6b6f65;border-left:2px solid #6b6f65;border-right:1px solid #a8a8a8;border-bottom:1px solid #b0b0b0;border-radius:2px;box-shadow:1px 1px 0 #fff"></div>
<div class="ab" style="left:268px;top:347px;width:33px;height:20px;background:#c8c8c8;border-top:2px solid #6b6f65;border-left:2px solid #6b6f65;border-right:1px solid #a8a8a8;border-bottom:1px solid #b0b0b0;border-radius:2px;box-shadow:1px 1px 0 #fff"></div>
<div class="ab" style="left:302px;top:347px;width:52px;height:20px;background:#c8c8c8;border-top:2px solid #6b6f65;border-left:2px solid #6b6f65;border-right:1px solid #a8a8a8;border-bottom:1px solid #b0b0b0;border-radius:2px;box-shadow:1px 1px 0 #fff"></div>
<div class="ab" style="left:355px;top:347px;width:44px;height:20px;background:#c8c8c8;border-top:2px solid #6b6f65;border-left:2px solid #6b6f65;border-right:1px solid #a8a8a8;border-bottom:1px solid #b0b0b0;border-radius:2px;box-shadow:1px 1px 0 #fff"></div>
<div class="ab" style="left:402px;top:347px;width:28px;height:20px;background:#c8c8c8;border-top:2px solid #6b6f65;border-left:2px solid #6b6f65;border-right:1px solid #a8a8a8;border-bottom:1px solid #b0b0b0;border-radius:2px;box-shadow:1px 1px 0 #fff"></div>
<div class="ab" style="left:432px;top:347px;width:25px;height:20px;background:#00bfff;border-top:2px solid #6b6f65;border-left:2px solid #6b6f65;border-right:1px solid #a8a8a8;border-bottom:1px solid #b0b0b0;border-radius:2px;box-shadow:1px 1px 0 #fff"></div>
<div class="ab" style="left:458px;top:347px;width:20px;height:19px;background:#dcdcdc;border-top:1px solid #fff;border-left:1px solid #fff;border-right:1px solid #a0a0a0;border-bottom:1px solid #a0a0a0;border-radius:2px;box-shadow:inset -1px -1px 0 #c4c4c4,inset 1px 1px 0 #c8c8c8"></div>
<svg class="ab" style="left:464px;top:356px" width="9" height="6"><path d="M0 0h9L4.5 5z" fill="#9c9c9c"/></svg>
<div class="ab" style="left:480px;top:347px;width:25px;height:20px;background:#00bfff;border-top:2px solid #6b6f65;border-left:2px solid #6b6f65;border-right:1px solid #a8a8a8;border-bottom:1px solid #b0b0b0;border-radius:2px;box-shadow:1px 1px 0 #fff"></div>
<div class="ab" style="left:506px;top:347px;width:18px;height:19px;background:#dcdcdc;border-top:1px solid #fff;border-left:1px solid #fff;border-right:1px solid #a0a0a0;border-bottom:1px solid #a0a0a0;border-radius:2px;box-shadow:inset -1px -1px 0 #c4c4c4,inset 1px 1px 0 #c8c8c8"></div>
<svg class="ab" style="left:511px;top:356px" width="9" height="6"><path d="M0 0h9L4.5 5z" fill="#9c9c9c"/></svg>
<div class="ab" style="left:525px;top:347px;width:78px;height:20px;background:#fff;border-top:2px solid #6b6f65;border-left:2px solid #6b6f65;border-right:1px solid #a8a8a8;border-bottom:1px solid #b0b0b0;border-radius:2px;box-shadow:1px 1px 0 #fff"></div>
<div class="ab" style="left:606px;top:347px;width:79px;height:20px;background:#fff;border-top:2px solid #6b6f65;border-left:2px solid #6b6f65;border-right:1px solid #a8a8a8;border-bottom:1px solid #b0b0b0;border-radius:2px;box-shadow:1px 1px 0 #fff"></div>
<div class="ab" style="left:688px;top:347px;width:67px;height:20px;background:#fff;border-top:2px solid #6b6f65;border-left:2px solid #6b6f65;border-right:1px solid #a8a8a8;border-bottom:1px solid #b0b0b0;border-radius:2px;box-shadow:1px 1px 0 #fff"></div>
<div class="ab" style="left:757px;top:347px;width:126px;height:20px;background:#c8c8c8;border-top:2px solid #6b6f65;border-left:2px solid #6b6f65;border-right:1px solid #a8a8a8;border-bottom:1px solid #b0b0b0;border-radius:2px;box-shadow:1px 1px 0 #fff"></div>
<div class="ab" style="left:16px;top:368px;width:21px;height:20px;background:#fffa80;border-top:2px solid #6b6f65;border-left:2px solid #6b6f65;border-right:1px solid #a8a8a8;border-bottom:1px solid #b0b0b0;border-radius:2px;box-shadow:1px 1px 0 #fff"></div>
<div class="ab" style="left:38px;top:368px;width:63px;height:20px;background:#40beff;border-top:2px solid #6b6f65;border-left:2px solid #6b6f65;border-right:1px solid #a8a8a8;border-bottom:1px solid #b0b0b0;border-radius:2px;box-shadow:1px 1px 0 #fff"></div>
<div class="ab" style="left:101px;top:368px;width:18px;height:19px;background:#dcdcdc;border-top:1px solid #fff;border-left:1px solid #fff;border-right:1px solid #a0a0a0;border-bottom:1px solid #a0a0a0;border-radius:2px;box-shadow:inset -1px -1px 0 #c4c4c4,inset 1px 1px 0 #c8c8c8"></div>
<svg class="ab" style="left:106px;top:377px" width="9" height="6"><path d="M0 0h9L4.5 5z" fill="#9c9c9c"/></svg>
<div class="ab" style="left:120px;top:368px;width:144px;height:20px;background:#c8c8c8;border-top:2px solid #6b6f65;border-left:2px solid #6b6f65;border-right:1px solid #a8a8a8;border-bottom:1px solid #b0b0b0;border-radius:2px;box-shadow:1px 1px 0 #fff"></div>
<div class="ab" style="left:268px;top:368px;width:33px;height:20px;background:#c8c8c8;border-top:2px solid #6b6f65;border-left:2px solid #6b6f65;border-right:1px solid #a8a8a8;border-bottom:1px solid #b0b0b0;border-radius:2px;box-shadow:1px 1px 0 #fff"></div>
<div class="ab" style="left:302px;top:368px;width:52px;height:20px;background:#c8c8c8;border-top:2px solid #6b6f65;border-left:2px solid #6b6f65;border-right:1px solid #a8a8a8;border-bottom:1px solid #b0b0b0;border-radius:2px;box-shadow:1px 1px 0 #fff"></div>
<div class="ab" style="left:355px;top:368px;width:44px;height:20px;background:#c8c8c8;border-top:2px solid #6b6f65;border-left:2px solid #6b6f65;border-right:1px solid #a8a8a8;border-bottom:1px solid #b0b0b0;border-radius:2px;box-shadow:1px 1px 0 #fff"></div>
<div class="ab" style="left:402px;top:368px;width:28px;height:20px;background:#c8c8c8;border-top:2px solid #6b6f65;border-left:2px solid #6b6f65;border-right:1px solid #a8a8a8;border-bottom:1px solid #b0b0b0;border-radius:2px;box-shadow:1px 1px 0 #fff"></div>
<div class="ab" style="left:432px;top:368px;width:25px;height:20px;background:#00bfff;border-top:2px solid #6b6f65;border-left:2px solid #6b6f65;border-right:1px solid #a8a8a8;border-bottom:1px solid #b0b0b0;border-radius:2px;box-shadow:1px 1px 0 #fff"></div>
<div class="ab" style="left:458px;top:368px;width:20px;height:19px;background:#dcdcdc;border-top:1px solid #fff;border-left:1px solid #fff;border-right:1px solid #a0a0a0;border-bottom:1px solid #a0a0a0;border-radius:2px;box-shadow:inset -1px -1px 0 #c4c4c4,inset 1px 1px 0 #c8c8c8"></div>
<svg class="ab" style="left:464px;top:377px" width="9" height="6"><path d="M0 0h9L4.5 5z" fill="#9c9c9c"/></svg>
<div class="ab" style="left:480px;top:368px;width:25px;height:20px;background:#00bfff;border-top:2px solid #6b6f65;border-left:2px solid #6b6f65;border-right:1px solid #a8a8a8;border-bottom:1px solid #b0b0b0;border-radius:2px;box-shadow:1px 1px 0 #fff"></div>
<div class="ab" style="left:506px;top:368px;width:18px;height:19px;background:#dcdcdc;border-top:1px solid #fff;border-left:1px solid #fff;border-right:1px solid #a0a0a0;border-bottom:1px solid #a0a0a0;border-radius:2px;box-shadow:inset -1px -1px 0 #c4c4c4,inset 1px 1px 0 #c8c8c8"></div>
<svg class="ab" style="left:511px;top:377px" width="9" height="6"><path d="M0 0h9L4.5 5z" fill="#9c9c9c"/></svg>
<div class="ab" style="left:525px;top:368px;width:78px;height:20px;background:#fff;border-top:2px solid #6b6f65;border-left:2px solid #6b6f65;border-right:1px solid #a8a8a8;border-bottom:1px solid #b0b0b0;border-radius:2px;box-shadow:1px 1px 0 #fff"></div>
<div class="ab" style="left:606px;top:368px;width:79px;height:20px;background:#fff;border-top:2px solid #6b6f65;border-left:2px solid #6b6f65;border-right:1px solid #a8a8a8;border-bottom:1px solid #b0b0b0;border-radius:2px;box-shadow:1px 1px 0 #fff"></div>
<div class="ab" style="left:688px;top:368px;width:67px;height:20px;background:#fff;border-top:2px solid #6b6f65;border-left:2px solid #6b6f65;border-right:1px solid #a8a8a8;border-bottom:1px solid #b0b0b0;border-radius:2px;box-shadow:1px 1px 0 #fff"></div>
<div class="ab" style="left:757px;top:368px;width:126px;height:20px;background:#c8c8c8;border-top:2px solid #6b6f65;border-left:2px solid #6b6f65;border-right:1px solid #a8a8a8;border-bottom:1px solid #b0b0b0;border-radius:2px;box-shadow:1px 1px 0 #fff"></div>
<div class="ab" style="left:16px;top:390px;width:21px;height:20px;background:#fffa80;border-top:2px solid #6b6f65;border-left:2px solid #6b6f65;border-right:1px solid #a8a8a8;border-bottom:1px solid #b0b0b0;border-radius:2px;box-shadow:1px 1px 0 #fff"></div>
<div class="ab" style="left:38px;top:390px;width:63px;height:20px;background:#40beff;border-top:2px solid #6b6f65;border-left:2px solid #6b6f65;border-right:1px solid #a8a8a8;border-bottom:1px solid #b0b0b0;border-radius:2px;box-shadow:1px 1px 0 #fff"></div>
<div class="ab" style="left:101px;top:390px;width:18px;height:19px;background:#dcdcdc;border-top:1px solid #fff;border-left:1px solid #fff;border-right:1px solid #a0a0a0;border-bottom:1px solid #a0a0a0;border-radius:2px;box-shadow:inset -1px -1px 0 #c4c4c4,inset 1px 1px 0 #c8c8c8"></div>
<svg class="ab" style="left:106px;top:399px" width="9" height="6"><path d="M0 0h9L4.5 5z" fill="#9c9c9c"/></svg>
<div class="ab" style="left:120px;top:390px;width:144px;height:20px;background:#c8c8c8;border-top:2px solid #6b6f65;border-left:2px solid #6b6f65;border-right:1px solid #a8a8a8;border-bottom:1px solid #b0b0b0;border-radius:2px;box-shadow:1px 1px 0 #fff"></div>
<div class="ab" style="left:268px;top:390px;width:33px;height:20px;background:#c8c8c8;border-top:2px solid #6b6f65;border-left:2px solid #6b6f65;border-right:1px solid #a8a8a8;border-bottom:1px solid #b0b0b0;border-radius:2px;box-shadow:1px 1px 0 #fff"></div>
<div class="ab" style="left:302px;top:390px;width:52px;height:20px;background:#c8c8c8;border-top:2px solid #6b6f65;border-left:2px solid #6b6f65;border-right:1px solid #a8a8a8;border-bottom:1px solid #b0b0b0;border-radius:2px;box-shadow:1px 1px 0 #fff"></div>
<div class="ab" style="left:355px;top:390px;width:44px;height:20px;background:#c8c8c8;border-top:2px solid #6b6f65;border-left:2px solid #6b6f65;border-right:1px solid #a8a8a8;border-bottom:1px solid #b0b0b0;border-radius:2px;box-shadow:1px 1px 0 #fff"></div>
<div class="ab" style="left:402px;top:390px;width:28px;height:20px;background:#c8c8c8;border-top:2px solid #6b6f65;border-left:2px solid #6b6f65;border-right:1px solid #a8a8a8;border-bottom:1px solid #b0b0b0;border-radius:2px;box-shadow:1px 1px 0 #fff"></div>
<div class="ab" style="left:432px;top:390px;width:25px;height:20px;background:#00bfff;border-top:2px solid #6b6f65;border-left:2px solid #6b6f65;border-right:1px solid #a8a8a8;border-bottom:1px solid #b0b0b0;border-radius:2px;box-shadow:1px 1px 0 #fff"></div>
<div class="ab" style="left:458px;top:390px;width:20px;height:19px;background:#dcdcdc;border-top:1px solid #fff;border-left:1px solid #fff;border-right:1px solid #a0a0a0;border-bottom:1px solid #a0a0a0;border-radius:2px;box-shadow:inset -1px -1px 0 #c4c4c4,inset 1px 1px 0 #c8c8c8"></div>
<svg class="ab" style="left:464px;top:399px" width="9" height="6"><path d="M0 0h9L4.5 5z" fill="#9c9c9c"/></svg>
<div class="ab" style="left:480px;top:390px;width:25px;height:20px;background:#00bfff;border-top:2px solid #6b6f65;border-left:2px solid #6b6f65;border-right:1px solid #a8a8a8;border-bottom:1px solid #b0b0b0;border-radius:2px;box-shadow:1px 1px 0 #fff"></div>
<div class="ab" style="left:506px;top:390px;width:18px;height:19px;background:#dcdcdc;border-top:1px solid #fff;border-left:1px solid #fff;border-right:1px solid #a0a0a0;border-bottom:1px solid #a0a0a0;border-radius:2px;box-shadow:inset -1px -1px 0 #c4c4c4,inset 1px 1px 0 #c8c8c8"></div>
<svg class="ab" style="left:511px;top:399px" width="9" height="6"><path d="M0 0h9L4.5 5z" fill="#9c9c9c"/></svg>
<div class="ab" style="left:525px;top:390px;width:78px;height:20px;background:#fff;border-top:2px solid #6b6f65;border-left:2px solid #6b6f65;border-right:1px solid #a8a8a8;border-bottom:1px solid #b0b0b0;border-radius:2px;box-shadow:1px 1px 0 #fff"></div>
<div class="ab" style="left:606px;top:390px;width:79px;height:20px;background:#fff;border-top:2px solid #6b6f65;border-left:2px solid #6b6f65;border-right:1px solid #a8a8a8;border-bottom:1px solid #b0b0b0;border-radius:2px;box-shadow:1px 1px 0 #fff"></div>
<div class="ab" style="left:688px;top:390px;width:67px;height:20px;background:#fff;border-top:2px solid #6b6f65;border-left:2px solid #6b6f65;border-right:1px solid #a8a8a8;border-bottom:1px solid #b0b0b0;border-radius:2px;box-shadow:1px 1px 0 #fff"></div>
<div class="ab" style="left:757px;top:390px;width:126px;height:20px;background:#c8c8c8;border-top:2px solid #6b6f65;border-left:2px solid #6b6f65;border-right:1px solid #a8a8a8;border-bottom:1px solid #b0b0b0;border-radius:2px;box-shadow:1px 1px 0 #fff"></div>
<div class="ab" style="left:16px;top:411px;width:21px;height:20px;background:#fffa80;border-top:2px solid #6b6f65;border-left:2px solid #6b6f65;border-right:1px solid #a8a8a8;border-bottom:1px solid #b0b0b0;border-radius:2px;box-shadow:1px 1px 0 #fff"></div>
<div class="ab" style="left:38px;top:411px;width:63px;height:20px;background:#40beff;border-top:2px solid #6b6f65;border-left:2px solid #6b6f65;border-right:1px solid #a8a8a8;border-bottom:1px solid #b0b0b0;border-radius:2px;box-shadow:1px 1px 0 #fff"></div>
<div class="ab" style="left:101px;top:411px;width:18px;height:19px;background:#dcdcdc;border-top:1px solid #fff;border-left:1px solid #fff;border-right:1px solid #a0a0a0;border-bottom:1px solid #a0a0a0;border-radius:2px;box-shadow:inset -1px -1px 0 #c4c4c4,inset 1px 1px 0 #c8c8c8"></div>
<svg class="ab" style="left:106px;top:420px" width="9" height="6"><path d="M0 0h9L4.5 5z" fill="#9c9c9c"/></svg>
<div class="ab" style="left:120px;top:411px;width:144px;height:20px;background:#c8c8c8;border-top:2px solid #6b6f65;border-left:2px solid #6b6f65;border-right:1px solid #a8a8a8;border-bottom:1px solid #b0b0b0;border-radius:2px;box-shadow:1px 1px 0 #fff"></div>
<div class="ab" style="left:268px;top:411px;width:33px;height:20px;background:#c8c8c8;border-top:2px solid #6b6f65;border-left:2px solid #6b6f65;border-right:1px solid #a8a8a8;border-bottom:1px solid #b0b0b0;border-radius:2px;box-shadow:1px 1px 0 #fff"></div>
<div class="ab" style="left:302px;top:411px;width:52px;height:20px;background:#c8c8c8;border-top:2px solid #6b6f65;border-left:2px solid #6b6f65;border-right:1px solid #a8a8a8;border-bottom:1px solid #b0b0b0;border-radius:2px;box-shadow:1px 1px 0 #fff"></div>
<div class="ab" style="left:355px;top:411px;width:44px;height:20px;background:#c8c8c8;border-top:2px solid #6b6f65;border-left:2px solid #6b6f65;border-right:1px solid #a8a8a8;border-bottom:1px solid #b0b0b0;border-radius:2px;box-shadow:1px 1px 0 #fff"></div>
<div class="ab" style="left:402px;top:411px;width:28px;height:20px;background:#c8c8c8;border-top:2px solid #6b6f65;border-left:2px solid #6b6f65;border-right:1px solid #a8a8a8;border-bottom:1px solid #b0b0b0;border-radius:2px;box-shadow:1px 1px 0 #fff"></div>
<div class="ab" style="left:432px;top:411px;width:25px;height:20px;background:#00bfff;border-top:2px solid #6b6f65;border-left:2px solid #6b6f65;border-right:1px solid #a8a8a8;border-bottom:1px solid #b0b0b0;border-radius:2px;box-shadow:1px 1px 0 #fff"></div>
<div class="ab" style="left:458px;top:411px;width:20px;height:19px;background:#dcdcdc;border-top:1px solid #fff;border-left:1px solid #fff;border-right:1px solid #a0a0a0;border-bottom:1px solid #a0a0a0;border-radius:2px;box-shadow:inset -1px -1px 0 #c4c4c4,inset 1px 1px 0 #c8c8c8"></div>
<svg class="ab" style="left:464px;top:420px" width="9" height="6"><path d="M0 0h9L4.5 5z" fill="#9c9c9c"/></svg>
<div class="ab" style="left:480px;top:411px;width:25px;height:20px;background:#00bfff;border-top:2px solid #6b6f65;border-left:2px solid #6b6f65;border-right:1px solid #a8a8a8;border-bottom:1px solid #b0b0b0;border-radius:2px;box-shadow:1px 1px 0 #fff"></div>
<div class="ab" style="left:506px;top:411px;width:18px;height:19px;background:#dcdcdc;border-top:1px solid #fff;border-left:1px solid #fff;border-right:1px solid #a0a0a0;border-bottom:1px solid #a0a0a0;border-radius:2px;box-shadow:inset -1px -1px 0 #c4c4c4,inset 1px 1px 0 #c8c8c8"></div>
<svg class="ab" style="left:511px;top:420px" width="9" height="6"><path d="M0 0h9L4.5 5z" fill="#9c9c9c"/></svg>
<div class="ab" style="left:525px;top:411px;width:78px;height:20px;background:#fff;border-top:2px solid #6b6f65;border-left:2px solid #6b6f65;border-right:1px solid #a8a8a8;border-bottom:1px solid #b0b0b0;border-radius:2px;box-shadow:1px 1px 0 #fff"></div>
<div class="ab" style="left:606px;top:411px;width:79px;height:20px;background:#fff;border-top:2px solid #6b6f65;border-left:2px solid #6b6f65;border-right:1px solid #a8a8a8;border-bottom:1px solid #b0b0b0;border-radius:2px;box-shadow:1px 1px 0 #fff"></div>
<div class="ab" style="left:688px;top:411px;width:67px;height:20px;background:#fff;border-top:2px solid #6b6f65;border-left:2px solid #6b6f65;border-right:1px solid #a8a8a8;border-bottom:1px solid #b0b0b0;border-radius:2px;box-shadow:1px 1px 0 #fff"></div>
<div class="ab" style="left:757px;top:411px;width:126px;height:20px;background:#c8c8c8;border-top:2px solid #6b6f65;border-left:2px solid #6b6f65;border-right:1px solid #a8a8a8;border-bottom:1px solid #b0b0b0;border-radius:2px;box-shadow:1px 1px 0 #fff"></div>
<div class="ab" style="left:41px;top:285px;width:1px;height:15px;background:#000"></div>
<div class="t" style="left:45px;top:444px;font-size:11.5px;font-weight:bold;letter-spacing:-0.5px">Seq NR</div>
<div class="t" style="left:105px;top:444px;font-size:11.5px;font-weight:bold;letter-spacing:-0.33px">Official Eartag</div>
<div class="t" style="left:194px;top:444px;font-size:11.5px;font-weight:bold;letter-spacing:0px">Animal Name</div>
<div class="t" style="left:298px;top:444px;font-size:11.5px;font-weight:bold;letter-spacing:0px">Regis. NR</div>
<div class="t" style="left:383px;top:444px;font-size:11.5px;font-weight:bold;letter-spacing:0px">Owner Tag</div>
<div class="t" style="left:487px;top:444px;font-size:11.5px;font-weight:bold;letter-spacing:0px">Tattoo</div>
<div class="t" style="left:574px;top:444px;font-size:11.5px;font-weight:bold;letter-spacing:0px">Implant</div>
<div class="t" style="left:695px;top:444px;font-size:11.5px;font-weight:bold;letter-spacing:0.4px">Remarks</div>
<div class="ab" style="left:16px;top:455px;width:21px;height:20px;background:#fffa80;border-top:2px solid #6b6f65;border-left:2px solid #6b6f65;border-right:1px solid #a8a8a8;border-bottom:1px solid #b0b0b0;border-radius:2px;box-shadow:1px 1px 0 #fff"></div>
<div class="t" style="left:19px;top:461px;font-size:12px;letter-spacing:1px">=&gt;</div>
<div class="ab" style="left:38px;top:455px;width:52px;height:20px;background:#c8c8c8;border-top:2px solid #6b6f65;border-left:2px solid #6b6f65;border-right:1px solid #a8a8a8;border-bottom:1px solid #b0b0b0;border-radius:2px;box-shadow:1px 1px 0 #fff"></div>
<div class="ab" style="left:91px;top:455px;width:90px;height:20px;background:#fff;border-top:2px solid #6b6f65;border-left:2px solid #6b6f65;border-right:1px solid #a8a8a8;border-bottom:1px solid #b0b0b0;border-radius:2px;box-shadow:1px 1px 0 #fff"></div>
<div class="ab" style="left:182px;top:455px;width:89px;height:20px;background:#fff;border-top:2px solid #6b6f65;border-left:2px solid #6b6f65;border-right:1px solid #a8a8a8;border-bottom:1px solid #b0b0b0;border-radius:2px;box-shadow:1px 1px 0 #fff"></div>
<div class="ab" style="left:274px;top:455px;width:89px;height:20px;background:#fff;border-top:2px solid #6b6f65;border-left:2px solid #6b6f65;border-right:1px solid #a8a8a8;border-bottom:1px solid #b0b0b0;border-radius:2px;box-shadow:1px 1px 0 #fff"></div>
<div class="ab" style="left:366px;top:455px;width:89px;height:20px;background:#fff;border-top:2px solid #6b6f65;border-left:2px solid #6b6f65;border-right:1px solid #a8a8a8;border-bottom:1px solid #b0b0b0;border-radius:2px;box-shadow:1px 1px 0 #fff"></div>
<div class="ab" style="left:456px;top:455px;width:90px;height:20px;background:#fff;border-top:2px solid #6b6f65;border-left:2px solid #6b6f65;border-right:1px solid #a8a8a8;border-bottom:1px solid #b0b0b0;border-radius:2px;box-shadow:1px 1px 0 #fff"></div>
<div class="ab" style="left:547px;top:455px;width:90px;height:20px;background:#fff;border-top:2px solid #6b6f65;border-left:2px solid #6b6f65;border-right:1px solid #a8a8a8;border-bottom:1px solid #b0b0b0;border-radius:2px;box-shadow:1px 1px 0 #fff"></div>
<div class="ab" style="left:639px;top:455px;width:179px;height:20px;background:#fff;border-top:2px solid #6b6f65;border-left:2px solid #6b6f65;border-right:1px solid #a8a8a8;border-bottom:1px solid #b0b0b0;border-radius:2px;box-shadow:1px 1px 0 #fff"></div>
<div class="ab" style="left:821px;top:456px;width:61px;height:19px;background:#c8c8c8;border-top:1px solid #fff;border-left:1px solid #fff;border-right:1px solid #6a6e60;border-bottom:1px solid #6a6e60;border-radius:2px;font-size:11px;color:#000;text-align:center;line-height:17px;white-space:nowrap">Add Animal</div>
<div class="ab" style="left:16px;top:476px;width:21px;height:20px;background:#fffa80;border-top:2px solid #6b6f65;border-left:2px solid #6b6f65;border-right:1px solid #a8a8a8;border-bottom:1px solid #b0b0b0;border-radius:2px;box-shadow:1px 1px 0 #fff"></div>
<div class="ab" style="left:38px;top:476px;width:52px;height:20px;background:#c8c8c8;border-top:2px solid #6b6f65;border-left:2px solid #6b6f65;border-right:1px solid #a8a8a8;border-bottom:1px solid #b0b0b0;border-radius:2px;box-shadow:1px 1px 0 #fff"></div>
<div class="ab" style="left:91px;top:476px;width:90px;height:20px;background:#fff;border-top:2px solid #6b6f65;border-left:2px solid #6b6f65;border-right:1px solid #a8a8a8;border-bottom:1px solid #b0b0b0;border-radius:2px;box-shadow:1px 1px 0 #fff"></div>
<div class="ab" style="left:182px;top:476px;width:89px;height:20px;background:#fff;border-top:2px solid #6b6f65;border-left:2px solid #6b6f65;border-right:1px solid #a8a8a8;border-bottom:1px solid #b0b0b0;border-radius:2px;box-shadow:1px 1px 0 #fff"></div>
<div class="ab" style="left:274px;top:476px;width:89px;height:20px;background:#fff;border-top:2px solid #6b6f65;border-left:2px solid #6b6f65;border-right:1px solid #a8a8a8;border-bottom:1px solid #b0b0b0;border-radius:2px;box-shadow:1px 1px 0 #fff"></div>
<div class="ab" style="left:366px;top:476px;width:89px;height:20px;background:#fff;border-top:2px solid #6b6f65;border-left:2px solid #6b6f65;border-right:1px solid #a8a8a8;border-bottom:1px solid #b0b0b0;border-radius:2px;box-shadow:1px 1px 0 #fff"></div>
<div class="ab" style="left:456px;top:476px;width:90px;height:20px;background:#fff;border-top:2px solid #6b6f65;border-left:2px solid #6b6f65;border-right:1px solid #a8a8a8;border-bottom:1px solid #b0b0b0;border-radius:2px;box-shadow:1px 1px 0 #fff"></div>
<div class="ab" style="left:547px;top:476px;width:90px;height:20px;background:#fff;border-top:2px solid #6b6f65;border-left:2px solid #6b6f65;border-right:1px solid #a8a8a8;border-bottom:1px solid #b0b0b0;border-radius:2px;box-shadow:1px 1px 0 #fff"></div>
<div class="ab" style="left:639px;top:476px;width:179px;height:20px;background:#fff;border-top:2px solid #6b6f65;border-left:2px solid #6b6f65;border-right:1px solid #a8a8a8;border-bottom:1px solid #b0b0b0;border-radius:2px;box-shadow:1px 1px 0 #fff"></div>
<div class="ab" style="left:821px;top:477px;width:61px;height:19px;background:#c8c8c8;border-top:1px solid #fff;border-left:1px solid #fff;border-right:1px solid #6a6e60;border-bottom:1px solid #6a6e60;border-radius:2px;font-size:11px;color:#7c8074;text-shadow:1px 1px 0 #f4f4f0;text-align:center;line-height:17px;white-space:nowrap">Add Animal</div>
<div class="ab" style="left:16px;top:498px;width:21px;height:20px;background:#fffa80;border-top:2px solid #6b6f65;border-left:2px solid #6b6f65;border-right:1px solid #a8a8a8;border-bottom:1px solid #b0b0b0;border-radius:2px;box-shadow:1px 1px 0 #fff"></div>
<div class="ab" style="left:38px;top:498px;width:52px;height:20px;background:#c8c8c8;border-top:2px solid #6b6f65;border-left:2px solid #6b6f65;border-right:1px solid #a8a8a8;border-bottom:1px solid #b0b0b0;border-radius:2px;box-shadow:1px 1px 0 #fff"></div>
<div class="ab" style="left:91px;top:498px;width:90px;height:20px;background:#fff;border-top:2px solid #6b6f65;border-left:2px solid #6b6f65;border-right:1px solid #a8a8a8;border-bottom:1px solid #b0b0b0;border-radius:2px;box-shadow:1px 1px 0 #fff"></div>
<div class="ab" style="left:182px;top:498px;width:89px;height:20px;background:#fff;border-top:2px solid #6b6f65;border-left:2px solid #6b6f65;border-right:1px solid #a8a8a8;border-bottom:1px solid #b0b0b0;border-radius:2px;box-shadow:1px 1px 0 #fff"></div>
<div class="ab" style="left:274px;top:498px;width:89px;height:20px;background:#fff;border-top:2px solid #6b6f65;border-left:2px solid #6b6f65;border-right:1px solid #a8a8a8;border-bottom:1px solid #b0b0b0;border-radius:2px;box-shadow:1px 1px 0 #fff"></div>
<div class="ab" style="left:366px;top:498px;width:89px;height:20px;background:#fff;border-top:2px solid #6b6f65;border-left:2px solid #6b6f65;border-right:1px solid #a8a8a8;border-bottom:1px solid #b0b0b0;border-radius:2px;box-shadow:1px 1px 0 #fff"></div>
<div class="ab" style="left:456px;top:498px;width:90px;height:20px;background:#fff;border-top:2px solid #6b6f65;border-left:2px solid #6b6f65;border-right:1px solid #a8a8a8;border-bottom:1px solid #b0b0b0;border-radius:2px;box-shadow:1px 1px 0 #fff"></div>
<div class="ab" style="left:547px;top:498px;width:90px;height:20px;background:#fff;border-top:2px solid #6b6f65;border-left:2px solid #6b6f65;border-right:1px solid #a8a8a8;border-bottom:1px solid #b0b0b0;border-radius:2px;box-shadow:1px 1px 0 #fff"></div>
<div class="ab" style="left:639px;top:498px;width:179px;height:20px;background:#fff;border-top:2px solid #6b6f65;border-left:2px solid #6b6f65;border-right:1px solid #a8a8a8;border-bottom:1px solid #b0b0b0;border-radius:2px;box-shadow:1px 1px 0 #fff"></div>
<div class="ab" style="left:821px;top:499px;width:61px;height:19px;background:#c8c8c8;border-top:1px solid #fff;border-left:1px solid #fff;border-right:1px solid #6a6e60;border-bottom:1px solid #6a6e60;border-radius:2px;font-size:11px;color:#7c8074;text-shadow:1px 1px 0 #f4f4f0;text-align:center;line-height:17px;white-space:nowrap">Add Animal</div>
<div class="ab" style="left:16px;top:519px;width:21px;height:20px;background:#fffa80;border-top:2px solid #6b6f65;border-left:2px solid #6b6f65;border-right:1px solid #a8a8a8;border-bottom:1px solid #b0b0b0;border-radius:2px;box-shadow:1px 1px 0 #fff"></div>
<div class="ab" style="left:38px;top:519px;width:52px;height:20px;background:#c8c8c8;border-top:2px solid #6b6f65;border-left:2px solid #6b6f65;border-right:1px solid #a8a8a8;border-bottom:1px solid #b0b0b0;border-radius:2px;box-shadow:1px 1px 0 #fff"></div>
<div class="ab" style="left:91px;top:519px;width:90px;height:20px;background:#fff;border-top:2px solid #6b6f65;border-left:2px solid #6b6f65;border-right:1px solid #a8a8a8;border-bottom:1px solid #b0b0b0;border-radius:2px;box-shadow:1px 1px 0 #fff"></div>
<div class="ab" style="left:182px;top:519px;width:89px;height:20px;background:#fff;border-top:2px solid #6b6f65;border-left:2px solid #6b6f65;border-right:1px solid #a8a8a8;border-bottom:1px solid #b0b0b0;border-radius:2px;box-shadow:1px 1px 0 #fff"></div>
<div class="ab" style="left:274px;top:519px;width:89px;height:20px;background:#fff;border-top:2px solid #6b6f65;border-left:2px solid #6b6f65;border-right:1px solid #a8a8a8;border-bottom:1px solid #b0b0b0;border-radius:2px;box-shadow:1px 1px 0 #fff"></div>
<div class="ab" style="left:366px;top:519px;width:89px;height:20px;background:#fff;border-top:2px solid #6b6f65;border-left:2px solid #6b6f65;border-right:1px solid #a8a8a8;border-bottom:1px solid #b0b0b0;border-radius:2px;box-shadow:1px 1px 0 #fff"></div>
<div class="ab" style="left:456px;top:519px;width:90px;height:20px;background:#fff;border-top:2px solid #6b6f65;border-left:2px solid #6b6f65;border-right:1px solid #a8a8a8;border-bottom:1px solid #b0b0b0;border-radius:2px;box-shadow:1px 1px 0 #fff"></div>
<div class="ab" style="left:547px;top:519px;width:90px;height:20px;background:#fff;border-top:2px solid #6b6f65;border-left:2px solid #6b6f65;border-right:1px solid #a8a8a8;border-bottom:1px solid #b0b0b0;border-radius:2px;box-shadow:1px 1px 0 #fff"></div>
<div class="ab" style="left:639px;top:519px;width:179px;height:20px;background:#fff;border-top:2px solid #6b6f65;border-left:2px solid #6b6f65;border-right:1px solid #a8a8a8;border-bottom:1px solid #b0b0b0;border-radius:2px;box-shadow:1px 1px 0 #fff"></div>
<div class="ab" style="left:821px;top:520px;width:61px;height:19px;background:#c8c8c8;border-top:1px solid #fff;border-left:1px solid #fff;border-right:1px solid #6a6e60;border-bottom:1px solid #6a6e60;border-radius:2px;font-size:11px;color:#7c8074;text-shadow:1px 1px 0 #f4f4f0;text-align:center;line-height:17px;white-space:nowrap">Add Animal</div>
<div class="ab" style="left:16px;top:540px;width:21px;height:20px;background:#fffa80;border-top:2px solid #6b6f65;border-left:2px solid #6b6f65;border-right:1px solid #a8a8a8;border-bottom:1px solid #b0b0b0;border-radius:2px;box-shadow:1px 1px 0 #fff"></div>
<div class="ab" style="left:38px;top:540px;width:52px;height:20px;background:#c8c8c8;border-top:2px solid #6b6f65;border-left:2px solid #6b6f65;border-right:1px solid #a8a8a8;border-bottom:1px solid #b0b0b0;border-radius:2px;box-shadow:1px 1px 0 #fff"></div>
<div class="ab" style="left:91px;top:540px;width:90px;height:20px;background:#fff;border-top:2px solid #6b6f65;border-left:2px solid #6b6f65;border-right:1px solid #a8a8a8;border-bottom:1px solid #b0b0b0;border-radius:2px;box-shadow:1px 1px 0 #fff"></div>
<div class="ab" style="left:182px;top:540px;width:89px;height:20px;background:#fff;border-top:2px solid #6b6f65;border-left:2px solid #6b6f65;border-right:1px solid #a8a8a8;border-bottom:1px solid #b0b0b0;border-radius:2px;box-shadow:1px 1px 0 #fff"></div>
<div class="ab" style="left:274px;top:540px;width:89px;height:20px;background:#fff;border-top:2px solid #6b6f65;border-left:2px solid #6b6f65;border-right:1px solid #a8a8a8;border-bottom:1px solid #b0b0b0;border-radius:2px;box-shadow:1px 1px 0 #fff"></div>
<div class="ab" style="left:366px;top:540px;width:89px;height:20px;background:#fff;border-top:2px solid #6b6f65;border-left:2px solid #6b6f65;border-right:1px solid #a8a8a8;border-bottom:1px solid #b0b0b0;border-radius:2px;box-shadow:1px 1px 0 #fff"></div>
<div class="ab" style="left:456px;top:540px;width:90px;height:20px;background:#fff;border-top:2px solid #6b6f65;border-left:2px solid #6b6f65;border-right:1px solid #a8a8a8;border-bottom:1px solid #b0b0b0;border-radius:2px;box-shadow:1px 1px 0 #fff"></div>
<div class="ab" style="left:547px;top:540px;width:90px;height:20px;background:#fff;border-top:2px solid #6b6f65;border-left:2px solid #6b6f65;border-right:1px solid #a8a8a8;border-bottom:1px solid #b0b0b0;border-radius:2px;box-shadow:1px 1px 0 #fff"></div>
<div class="ab" style="left:639px;top:540px;width:179px;height:20px;background:#fff;border-top:2px solid #6b6f65;border-left:2px solid #6b6f65;border-right:1px solid #a8a8a8;border-bottom:1px solid #b0b0b0;border-radius:2px;box-shadow:1px 1px 0 #fff"></div>
<div class="ab" style="left:821px;top:541px;width:61px;height:19px;background:#c8c8c8;border-top:1px solid #fff;border-left:1px solid #fff;border-right:1px solid #6a6e60;border-bottom:1px solid #6a6e60;border-radius:2px;font-size:11px;color:#7c8074;text-shadow:1px 1px 0 #f4f4f0;text-align:center;line-height:17px;white-space:nowrap">Add Animal</div>
<div class="ab" style="left:16px;top:562px;width:21px;height:20px;background:#fffa80;border-top:2px solid #6b6f65;border-left:2px solid #6b6f65;border-right:1px solid #a8a8a8;border-bottom:1px solid #b0b0b0;border-radius:2px;box-shadow:1px 1px 0 #fff"></div>
<div class="ab" style="left:38px;top:562px;width:52px;height:20px;background:#c8c8c8;border-top:2px solid #6b6f65;border-left:2px solid #6b6f65;border-right:1px solid #a8a8a8;border-bottom:1px solid #b0b0b0;border-radius:2px;box-shadow:1px 1px 0 #fff"></div>
<div class="ab" style="left:91px;top:562px;width:90px;height:20px;background:#fff;border-top:2px solid #6b6f65;border-left:2px solid #6b6f65;border-right:1px solid #a8a8a8;border-bottom:1px solid #b0b0b0;border-radius:2px;box-shadow:1px 1px 0 #fff"></div>
<div class="ab" style="left:182px;top:562px;width:89px;height:20px;background:#fff;border-top:2px solid #6b6f65;border-left:2px solid #6b6f65;border-right:1px solid #a8a8a8;border-bottom:1px solid #b0b0b0;border-radius:2px;box-shadow:1px 1px 0 #fff"></div>
<div class="ab" style="left:274px;top:562px;width:89px;height:20px;background:#fff;border-top:2px solid #6b6f65;border-left:2px solid #6b6f65;border-right:1px solid #a8a8a8;border-bottom:1px solid #b0b0b0;border-radius:2px;box-shadow:1px 1px 0 #fff"></div>
<div class="ab" style="left:366px;top:562px;width:89px;height:20px;background:#fff;border-top:2px solid #6b6f65;border-left:2px solid #6b6f65;border-right:1px solid #a8a8a8;border-bottom:1px solid #b0b0b0;border-radius:2px;box-shadow:1px 1px 0 #fff"></div>
<div class="ab" style="left:456px;top:562px;width:90px;height:20px;background:#fff;border-top:2px solid #6b6f65;border-left:2px solid #6b6f65;border-right:1px solid #a8a8a8;border-bottom:1px solid #b0b0b0;border-radius:2px;box-shadow:1px 1px 0 #fff"></div>
<div class="ab" style="left:547px;top:562px;width:90px;height:20px;background:#fff;border-top:2px solid #6b6f65;border-left:2px solid #6b6f65;border-right:1px solid #a8a8a8;border-bottom:1px solid #b0b0b0;border-radius:2px;box-shadow:1px 1px 0 #fff"></div>
<div class="ab" style="left:639px;top:562px;width:179px;height:20px;background:#fff;border-top:2px solid #6b6f65;border-left:2px solid #6b6f65;border-right:1px solid #a8a8a8;border-bottom:1px solid #b0b0b0;border-radius:2px;box-shadow:1px 1px 0 #fff"></div>
<div class="ab" style="left:821px;top:563px;width:61px;height:19px;background:#c8c8c8;border-top:1px solid #fff;border-left:1px solid #fff;border-right:1px solid #6a6e60;border-bottom:1px solid #6a6e60;border-radius:2px;font-size:11px;color:#7c8074;text-shadow:1px 1px 0 #f4f4f0;text-align:center;line-height:17px;white-space:nowrap">Add Animal</div>
<div class="ab" style="left:16px;top:583px;width:21px;height:20px;background:#fffa80;border-top:2px solid #6b6f65;border-left:2px solid #6b6f65;border-right:1px solid #a8a8a8;border-bottom:1px solid #b0b0b0;border-radius:2px;box-shadow:1px 1px 0 #fff"></div>
<div class="ab" style="left:38px;top:583px;width:52px;height:20px;background:#c8c8c8;border-top:2px solid #6b6f65;border-left:2px solid #6b6f65;border-right:1px solid #a8a8a8;border-bottom:1px solid #b0b0b0;border-radius:2px;box-shadow:1px 1px 0 #fff"></div>
<div class="ab" style="left:91px;top:583px;width:90px;height:20px;background:#fff;border-top:2px solid #6b6f65;border-left:2px solid #6b6f65;border-right:1px solid #a8a8a8;border-bottom:1px solid #b0b0b0;border-radius:2px;box-shadow:1px 1px 0 #fff"></div>
<div class="ab" style="left:182px;top:583px;width:89px;height:20px;background:#fff;border-top:2px solid #6b6f65;border-left:2px solid #6b6f65;border-right:1px solid #a8a8a8;border-bottom:1px solid #b0b0b0;border-radius:2px;box-shadow:1px 1px 0 #fff"></div>
<div class="ab" style="left:274px;top:583px;width:89px;height:20px;background:#fff;border-top:2px solid #6b6f65;border-left:2px solid #6b6f65;border-right:1px solid #a8a8a8;border-bottom:1px solid #b0b0b0;border-radius:2px;box-shadow:1px 1px 0 #fff"></div>
<div class="ab" style="left:366px;top:583px;width:89px;height:20px;background:#fff;border-top:2px solid #6b6f65;border-left:2px solid #6b6f65;border-right:1px solid #a8a8a8;border-bottom:1px solid #b0b0b0;border-radius:2px;box-shadow:1px 1px 0 #fff"></div>
<div class="ab" style="left:456px;top:583px;width:90px;height:20px;background:#fff;border-top:2px solid #6b6f65;border-left:2px solid #6b6f65;border-right:1px solid #a8a8a8;border-bottom:1px solid #b0b0b0;border-radius:2px;box-shadow:1px 1px 0 #fff"></div>
<div class="ab" style="left:547px;top:583px;width:90px;height:20px;background:#fff;border-top:2px solid #6b6f65;border-left:2px solid #6b6f65;border-right:1px solid #a8a8a8;border-bottom:1px solid #b0b0b0;border-radius:2px;box-shadow:1px 1px 0 #fff"></div>
<div class="ab" style="left:639px;top:583px;width:179px;height:20px;background:#fff;border-top:2px solid #6b6f65;border-left:2px solid #6b6f65;border-right:1px solid #a8a8a8;border-bottom:1px solid #b0b0b0;border-radius:2px;box-shadow:1px 1px 0 #fff"></div>
<div class="ab" style="left:821px;top:584px;width:61px;height:19px;background:#c8c8c8;border-top:1px solid #fff;border-left:1px solid #fff;border-right:1px solid #6a6e60;border-bottom:1px solid #6a6e60;border-radius:2px;font-size:11px;color:#7c8074;text-shadow:1px 1px 0 #f4f4f0;text-align:center;line-height:17px;white-space:nowrap">Add Animal</div>
<div class="ab" style="left:648px;top:608px;width:90px;height:21px;background:#c8c8c8;border-top:1px solid #fff;border-left:1px solid #fff;border-right:1px solid #707070;border-bottom:1px solid #707070;border-radius:2px;font-size:12px;font-weight:bold;letter-spacing:-0.3px;text-align:center;line-height:19px">Risk Info</div>
<div class="ab" style="left:748px;top:608px;width:63px;height:21px;background:#c8c8c8;border-top:1px solid #fff;border-left:1px solid #fff;border-right:1px solid #707070;border-bottom:1px solid #707070;border-radius:2px;font-size:12px;font-weight:bold;letter-spacing:-0.3px;text-align:center;line-height:19px">Save</div>
<div class="ab" style="left:821px;top:608px;width:64px;height:21px;background:#c8c8c8;border-top:1px solid #fff;border-left:1px solid #fff;border-right:1px solid #707070;border-bottom:1px solid #707070;border-radius:2px;font-size:12px;font-weight:bold;letter-spacing:-0.3px;text-align:center;line-height:19px">Exit</div>
<div class="ab" style="left:16px;top:638px;width:893px;height:38px;border-top:1px solid #4a4a44;border-left:1px solid #3c3c34;border-right:1px solid #a8a890;border-bottom:1px solid #a8ac98;border-radius:8px"></div>
<div class="ab" style="left:22px;top:657px;width:880px;height:1px;background:#404038"></div>

<div class="ab" style="left:148px;top:659px;width:1px;height:14px;background:#a8ac98;box-shadow:-1px 0 0 #404038"></div>
<div class="ab" style="left:176px;top:659px;width:1px;height:14px;background:#a8ac98;box-shadow:-1px 0 0 #404038"></div>
<div class="ab" style="left:256px;top:659px;width:1px;height:14px;background:#a8ac98;box-shadow:-1px 0 0 #404038"></div>
<div class="ab" style="left:345px;top:659px;width:1px;height:14px;background:#a8ac98;box-shadow:-1px 0 0 #404038"></div>
<div class="ab" style="left:400px;top:659px;width:1px;height:14px;background:#a8ac98;box-shadow:-1px 0 0 #404038"></div>
<div class="ab" style="left:893px;top:640px;width:1px;height:17px;background:#a8ac98;box-shadow:2px 0 0 #404038"></div>
<div class="t" style="left:22px;top:661px;font-size:12px;color:#f0f0f0">Record: 1/1</div>
<div class="t" style="left:238px;top:661px;font-size:12px;color:#f0f0f0">...</div>
<div class="t" style="left:264px;top:661px;font-size:12px;color:#f0f0f0">List of Valu...</div>
<div class="t" style="left:408px;top:661px;font-size:12px;color:#f0f0f0">&lt;OSC&gt;</div>
<div class="ab" style="left:0;top:709px;width:1024px;height:25px;background:linear-gradient(#f6f4ea 0px,#f6f4ea 1px,#d4cfb8 1px,#d4cfb8 2px,#eeebdd 2px,#ece9d8 12px)"></div>
<svg class="ab" style="left:2px;top:714px" width="17" height="17" viewBox="0 0 17 17">
<path d="M5.5 2.5h8l2 2v12h-10z" fill="#6a6a58" opacity=".35"/>
<path d="M4.5 1.5h8l2 2v12h-10z" fill="#dce4ff" stroke="#6a72b8"/>
<path d="M5.5 2.5h6v2h-6z" fill="#fff"/>
<path d="M4 9.8h7.6a3.8 3.8 0 1 0-1.1 2.9" fill="none" stroke="#1a80e0" stroke-width="2.1"/>
<path d="M1.5 14.5c2-5 7-9 11-10" fill="none" stroke="#48c0ff" stroke-width="1.2" stroke-dasharray="1.5 .8"/>
</svg>
<div class="t" style="left:22px;top:719px;font-size:11px;letter-spacing:-0.1px;width:700px;overflow:hidden">Opening http://cowebforms.aphis.usda.gov/forms90/l90servlet;jsessionid=c784b109ce68cb562062c6b44c59f3eae9f42a96907.mQXAmQXMmlaP</div>

<div class="ab" style="left:748px;top:714px;width:1px;height:18px;background:#cbc7b4;box-shadow:1px 0 0 #fff"></div>
<div class="ab" style="left:773px;top:714px;width:1px;height:18px;background:#cbc7b4;box-shadow:1px 0 0 #fff"></div>
<div class="ab" style="left:797px;top:714px;width:1px;height:18px;background:#cbc7b4;box-shadow:1px 0 0 #fff"></div>
<div class="ab" style="left:820px;top:714px;width:1px;height:18px;background:#cbc7b4;box-shadow:1px 0 0 #fff"></div>
<div class="ab" style="left:844px;top:714px;width:1px;height:18px;background:#cbc7b4;box-shadow:1px 0 0 #fff"></div>
<div class="ab" style="left:869px;top:714px;width:1px;height:18px;background:#cbc7b4;box-shadow:1px 0 0 #fff"></div>
<svg class="ab" style="left:875px;top:716px" width="14" height="14" viewBox="0 0 14 14">
<circle cx="7" cy="7" r="6.5" fill="#18902a" stroke="#0a5a14"/>
<path d="M3.5 7.5l2.5 2.5 4.5-5.5" stroke="#fff" stroke-width="2" fill="none"/>
</svg>
<div class="t" style="left:893px;top:719px;font-size:11px">Trusted sites</div>

<div class="ab" style="left:0;top:734px;width:1024px;height:34px;background:linear-gradient(#1e4ec4 0px,#1e4ec4 1px,#3c8cf4 1px,#3a88f0 4px,#2c6ce0 4.5px,#2c6ce0 5px,#3a80ee 5.5px,#3276e6 7px,#2a60da 9px,#2a5fda 28px,#2456d0 34px)"></div>
<div class="ab" style="left:0;top:738px;width:97px;height:31px;background:linear-gradient(#3c8c3c 0px,#68b868 1px,#4aa64a 3px,#3c9c3c 8px,#3ea23e 20px,#3a9a3a 28px,#2a7a2a 31px);border-radius:0 11px 11px 0/0 15px 15px 0;box-shadow:inset -3px 0 3px -1px #206a20,inset 1px 0 0 #5ab05a"></div>
<svg class="ab" style="left:10px;top:744px" width="20" height="18" viewBox="0 0 20 18">
<path d="M3 2q3-2 6 0l-1 6q-3-2-6 0z" fill="#f2622a"/>
<path d="M10 2q3 2 7 0l-1 6q-3 2-7 0z" fill="#6cc82e"/>
<path d="M2 9q3-2 6 0l-1 7q-3-2-6 0z" fill="#3a94f8"/>
<path d="M9 9q3 2 7 0l-1 7q-3 2-7 0z" fill="#f8c81a"/>
</svg>
<div class="t" style="left:34px;top:744px;font-size:18px;font-weight:bold;font-style:italic;color:#fff;text-shadow:1px 1px 1px #1a4a1a">start</div>

<div class="ab" style="left:106px;top:745px;width:2px;height:2px;background:#0a2a98;box-shadow:1px 1px 0 #3aa8ff"></div>
<div class="ab" style="left:109px;top:748px;width:2px;height:2px;background:#0a2a98;box-shadow:1px 1px 0 #3aa8ff"></div>
<div class="ab" style="left:106px;top:751px;width:2px;height:2px;background:#0a2a98;box-shadow:1px 1px 0 #3aa8ff"></div>
<div class="ab" style="left:109px;top:754px;width:2px;height:2px;background:#0a2a98;box-shadow:1px 1px 0 #3aa8ff"></div>
<div class="ab" style="left:106px;top:757px;width:2px;height:2px;background:#0a2a98;box-shadow:1px 1px 0 #3aa8ff"></div>
<div class="ab" style="left:109px;top:760px;width:2px;height:2px;background:#0a2a98;box-shadow:1px 1px 0 #3aa8ff"></div>
<div class="ab" style="left:106px;top:763px;width:2px;height:2px;background:#0a2a98;box-shadow:1px 1px 0 #3aa8ff"></div>
<div class="ab" style="left:238px;top:745px;width:2px;height:2px;background:#0a2a98;box-shadow:1px 1px 0 #3aa8ff"></div>
<div class="ab" style="left:241px;top:748px;width:2px;height:2px;background:#0a2a98;box-shadow:1px 1px 0 #3aa8ff"></div>
<div class="ab" style="left:238px;top:751px;width:2px;height:2px;background:#0a2a98;box-shadow:1px 1px 0 #3aa8ff"></div>
<div class="ab" style="left:241px;top:754px;width:2px;height:2px;background:#0a2a98;box-shadow:1px 1px 0 #3aa8ff"></div>
<div class="ab" style="left:238px;top:757px;width:2px;height:2px;background:#0a2a98;box-shadow:1px 1px 0 #3aa8ff"></div>
<div class="ab" style="left:241px;top:760px;width:2px;height:2px;background:#0a2a98;box-shadow:1px 1px 0 #3aa8ff"></div>
<div class="ab" style="left:238px;top:763px;width:2px;height:2px;background:#0a2a98;box-shadow:1px 1px 0 #3aa8ff"></div>
<svg class="ab" style="left:118px;top:743px" width="18" height="18" viewBox="0 0 18 18"><path d="M3 10a6 5 0 1 1 12 0H4m0 0a6 5 0 0 0 11 3" fill="none" stroke="#5ab0ff" stroke-width="2.5"/><path d="M2 15c3-8 10-13 14-12" fill="none" stroke="#9ad0ff" stroke-width="1"/></svg>
<svg class="ab" style="left:141px;top:743px" width="18" height="18" viewBox="0 0 18 18"><rect x="2" y="3" width="13" height="13" rx="2" fill="#e8f0ff" stroke="#2a5ab0"/><path d="M5 12l6-6" stroke="#2a6ad0" stroke-width="2"/><circle cx="13" cy="4" r="2" fill="#f08020"/></svg>
<svg class="ab" style="left:164px;top:743px" width="18" height="18" viewBox="0 0 18 18"><rect x="1" y="2" width="16" height="14" fill="#f0f4ff" stroke="#2a4a9a"/><text x="2" y="14" font-family="Liberation Serif" font-size="12" font-style="italic" font-weight="bold" fill="#2a4ab0">W</text></svg>
<svg class="ab" style="left:187px;top:743px" width="18" height="18" viewBox="0 0 18 18"><circle cx="9" cy="9" r="8" fill="#f39018" stroke="#c06010"/><path d="M6 5v8M9 5v8M12 5v8" stroke="#ffe070" stroke-width="1.5"/></svg>
<svg class="ab" style="left:210px;top:743px" width="18" height="18" viewBox="0 0 18 18"><circle cx="9" cy="9" r="8" fill="#e8e8f8" stroke="#3a8a3a" stroke-width="1.5"/><circle cx="9" cy="9" r="5" fill="#3a5ac8"/><path d="M7.5 6.5v5l4-2.5z" fill="#fff"/></svg>

<div class="ab" style="left:250px;top:742px;width:67px;height:24px;background:linear-gradient(#4a90f8,#3c81f4 20%,#3a7ef0 80%,#2f6ee0);border-radius:3px;box-shadow:inset 1px 1px 0 #6aa8ff"></div>
<svg class="ab" style="left:258px;top:745px" width="17" height="17" viewBox="0 0 18 18"><circle cx="9" cy="9" r="8" fill="#f39018" stroke="#c06010"/><path d="M6 5v8M9 5v8M12 5v8" stroke="#ffe070" stroke-width="1.5"/></svg>
<div class="t" style="left:278px;top:749px;font-size:11.5px;color:#fff">A...</div>
<div class="ab" style="left:319px;top:742px;width:68px;height:24px;background:linear-gradient(#4a90f8,#3c81f4 20%,#3a7ef0 80%,#2f6ee0);border-radius:3px;box-shadow:inset 1px 1px 0 #6aa8ff"></div>
<svg class="ab" style="left:327px;top:745px" width="18" height="17" viewBox="0 0 18 17"><path d="M1 4h6l2 2h8v9H1z" fill="#f8d868" stroke="#b08a20"/><path d="M1 15l2-7h15l-2 7z" fill="#ffe890" stroke="#b08a20"/></svg>
<div class="t" style="left:347px;top:749px;font-size:11.5px;color:#fff">C:...</div>
<div class="ab" style="left:389px;top:742px;width:68px;height:24px;background:linear-gradient(#4a90f8,#3c81f4 20%,#3a7ef0 80%,#2f6ee0);border-radius:3px;box-shadow:inset 1px 1px 0 #6aa8ff"></div>
<svg class="ab" style="left:397px;top:744px" width="18" height="19" viewBox="0 0 18 19"><path d="M4 1h10l3 3v14H4z" fill="#f8f8ff" stroke="#6a7aa0"/><rect x="1" y="3" width="10" height="9" fill="#2a50b8"/><text x="2" y="11" font-family="Liberation Serif" font-size="9" font-weight="bold" fill="#fff">W</text><path d="M12 8h4M12 11h4M6 14h10" stroke="#8a9ac0"/></svg>
<div class="t" style="left:417px;top:749px;font-size:11.5px;color:#fff">Ta...</div>
<div class="ab" style="left:459px;top:742px;width:68px;height:24px;background:linear-gradient(#4a90f8,#3c81f4 20%,#3a7ef0 80%,#2f6ee0);border-radius:3px;box-shadow:inset 1px 1px 0 #6aa8ff"></div>
<svg class="ab" style="left:467px;top:744px" width="18" height="18" viewBox="0 0 18 18"><rect x="1" y="1" width="16" height="16" fill="#d85a2a" stroke="#8a2a10"/><rect x="3" y="4" width="12" height="9" fill="#fff"/><circle cx="8" cy="8.5" r="3" fill="#d85a2a"/></svg>
<div class="t" style="left:487px;top:749px;font-size:11.5px;color:#fff">Mi...</div>
<div class="ab" style="left:529px;top:742px;width:68px;height:24px;background:linear-gradient(#4a90f8,#3c81f4 20%,#3a7ef0 80%,#2f6ee0);border-radius:3px;box-shadow:inset 1px 1px 0 #6aa8ff"></div>
<svg class="ab" style="left:537px;top:744px" width="18" height="19" viewBox="0 0 18 19"><path d="M4 1h10l3 3v14H4z" fill="#f8f8ff" stroke="#6a7aa0"/><rect x="1" y="3" width="10" height="9" fill="#2a50b8"/><text x="2" y="11" font-family="Liberation Serif" font-size="9" font-weight="bold" fill="#fff">W</text><path d="M12 8h4M12 11h4M6 14h10" stroke="#8a9ac0"/></svg>
<div class="t" style="left:557px;top:749px;font-size:11.5px;color:#fff">Re...</div>
<div class="ab" style="left:599px;top:742px;width:68px;height:24px;background:linear-gradient(#4a90f8,#3c81f4 20%,#3a7ef0 80%,#2f6ee0);border-radius:3px;box-shadow:inset 1px 1px 0 #6aa8ff"></div>
<svg class="ab" style="left:607px;top:744px" width="18" height="19" viewBox="0 0 18 19"><path d="M4 1h10l3 3v14H4z" fill="#f8f8ff" stroke="#6a7aa0"/><rect x="1" y="3" width="10" height="9" fill="#2a50b8"/><text x="2" y="11" font-family="Liberation Serif" font-size="9" font-weight="bold" fill="#fff">W</text><path d="M12 8h4M12 11h4M6 14h10" stroke="#8a9ac0"/></svg>
<div class="t" style="left:627px;top:749px;font-size:11.5px;color:#fff">Ta...</div>
<div class="ab" style="left:669px;top:742px;width:68px;height:24px;background:linear-gradient(#4a90f8,#3c81f4 20%,#3a7ef0 80%,#2f6ee0);border-radius:3px;box-shadow:inset 1px 1px 0 #6aa8ff"></div>
<svg class="ab" style="left:677px;top:744px" width="18" height="19" viewBox="0 0 18 19"><path d="M4 1h10l3 3v14H4z" fill="#f8f8ff" stroke="#6a7aa0"/><rect x="1" y="3" width="10" height="9" fill="#2a50b8"/><text x="2" y="11" font-family="Liberation Serif" font-size="9" font-weight="bold" fill="#fff">W</text><path d="M12 8h4M12 11h4M6 14h10" stroke="#8a9ac0"/></svg>
<div class="t" style="left:697px;top:749px;font-size:11.5px;color:#fff">Ta...</div>
<div class="ab" style="left:739px;top:742px;width:71px;height:24px;background:#1e52c4;border-radius:3px;box-shadow:inset 1px 1px 2px #103a9a"></div>
<svg class="ab" style="left:747px;top:744px" width="18" height="19" viewBox="0 0 18 19"><path d="M5 1h9l3 3v14H5z" fill="#f4f4ee" stroke="#6a6a6a"/><path d="M2 10a6 5 0 1 1 11 0H3m0 0a6 5 0 0 0 10 3" fill="none" stroke="#2a6ad0" stroke-width="2.2"/></svg>
<div class="t" style="left:769px;top:749px;font-size:11.5px;color:#fff">Ve...</div>
<div class="ab" style="left:823px;top:738px;width:201px;height:30px;background:linear-gradient(#18a8f8 0px,#14a2f4 3px,#0e98ec 16px,#0c92e8 26px,#0a86dc 30px);border-left:1px solid #0a4ab8;box-shadow:inset 1px 0 0 #40b8ff"></div>
<svg class="ab" style="left:814px;top:744px" width="19" height="19" viewBox="0 0 19 19"><defs><radialGradient id="tb" cx="35%" cy="30%" r="70%"><stop offset="0" stop-color="#7ac8ff"/><stop offset="1" stop-color="#1a6ae0"/></radialGradient></defs><circle cx="9.5" cy="9.5" r="8.7" fill="url(#tb)" stroke="#a8c8f0" stroke-width="1"/><path d="M11 5.5L7 9.5l4 4" stroke="#fff" stroke-width="2.2" fill="none"/></svg>
<svg class="ab" style="left:834px;top:745px" width="17" height="16" viewBox="0 0 17 16"><circle cx="3" cy="2.5" r="2" fill="#ddd" stroke="#000"/><circle cx="14" cy="2.5" r="2" fill="#ddd" stroke="#000"/><path d="M5 2.5h7" stroke="#a08060"/><path d="M0 12.5h17" stroke="#c8f030" stroke-width="2"/><path d="M5.5 8V6a3 3 0 0 1 6 0v2" stroke="#c08a10" stroke-width="1.8" fill="none"/><rect x="4" y="8" width="9" height="8" fill="#f0b020" stroke="#a07010" stroke-width=".8"/><path d="M6 11h5M6 13h5" stroke="#ffe080" stroke-width=".8"/></svg>
<svg class="ab" style="left:852px;top:745px" width="15" height="16" viewBox="0 0 15 16"><path d="M1 8l4 3-3 4M14 8l-4 3 3 4M4 10l2 5M11 10l-2 5" stroke="#e8e8e8" stroke-width="2" fill="none"/><circle cx="9" cy="5.5" r="5" fill="#38a838" stroke="#fff" stroke-width="1"/><path d="M6.5 5.5l2 2 3-3.5" stroke="#fff" stroke-width="1.6" fill="none"/></svg>
<svg class="ab" style="left:871px;top:745px" width="15" height="16" viewBox="0 0 15 16"><path d="M5 3l9 6-4 6-8-5z" fill="#d8d8d8" stroke="#a0a0a0" stroke-width=".8"/><path d="M1 8l7 7M8 8l-7 7" stroke="#ff1010" stroke-width="2"/></svg>
<svg class="ab" style="left:888px;top:745px" width="16" height="16" viewBox="0 0 16 16"><rect x="0" y="0" width="2" height="16" fill="#000"/><rect x="3" y="2" width="6" height="6" fill="#ff0000"/><path d="M3 8h8v1H3z" fill="#000"/><path d="M10 6l4 0-3 2z" fill="#e01010"/></svg>
<svg class="ab" style="left:906px;top:745px" width="16" height="16" viewBox="0 0 16 16"><rect x="1" y="3" width="8" height="6" fill="#3a3a60" stroke="#d0d0e0" stroke-width=".8"/><path d="M1.5 12.5h7" stroke="#e8e8f0" stroke-width="2"/><path d="M10 2.5a5 5 0 0 1 0 6M13 1a8 8 0 0 1 0 9" stroke="#e0d8c0" stroke-width="1.3" fill="none"/></svg>
<svg class="ab" style="left:924px;top:745px" width="16" height="16" viewBox="0 0 16 16"><rect x="6" y="0.5" width="7" height="6" fill="#3a3a60" stroke="#d0d0e0" stroke-width=".8"/><rect x="1" y="4" width="7" height="6" fill="#3a3a60" stroke="#d0d0e0" stroke-width=".8"/><path d="M1 13h6" stroke="#e8e8f0" stroke-width="2"/><path d="M8 9l7 7M15 9l-7 7" stroke="#f02020" stroke-width="2"/></svg>
<svg class="ab" style="left:943px;top:745px" width="13" height="16" viewBox="0 0 13 16"><path d="M6.5 .7l5.8 2.2v5c0 3.5-2.5 6.3-5.8 7.4C3.2 14.2.7 11.4.7 7.9v-5z" fill="#f8e020" stroke="#2a3a80" stroke-width="1"/><path d="M6.5 4.5v5" stroke="#000" stroke-width="1.8"/><circle cx="6.5" cy="11.5" r="1" fill="#000"/></svg>

<div class="t" style="left:968px;top:749px;font-size:11px;color:#fff">8:16 AM</div>
</body></html>
